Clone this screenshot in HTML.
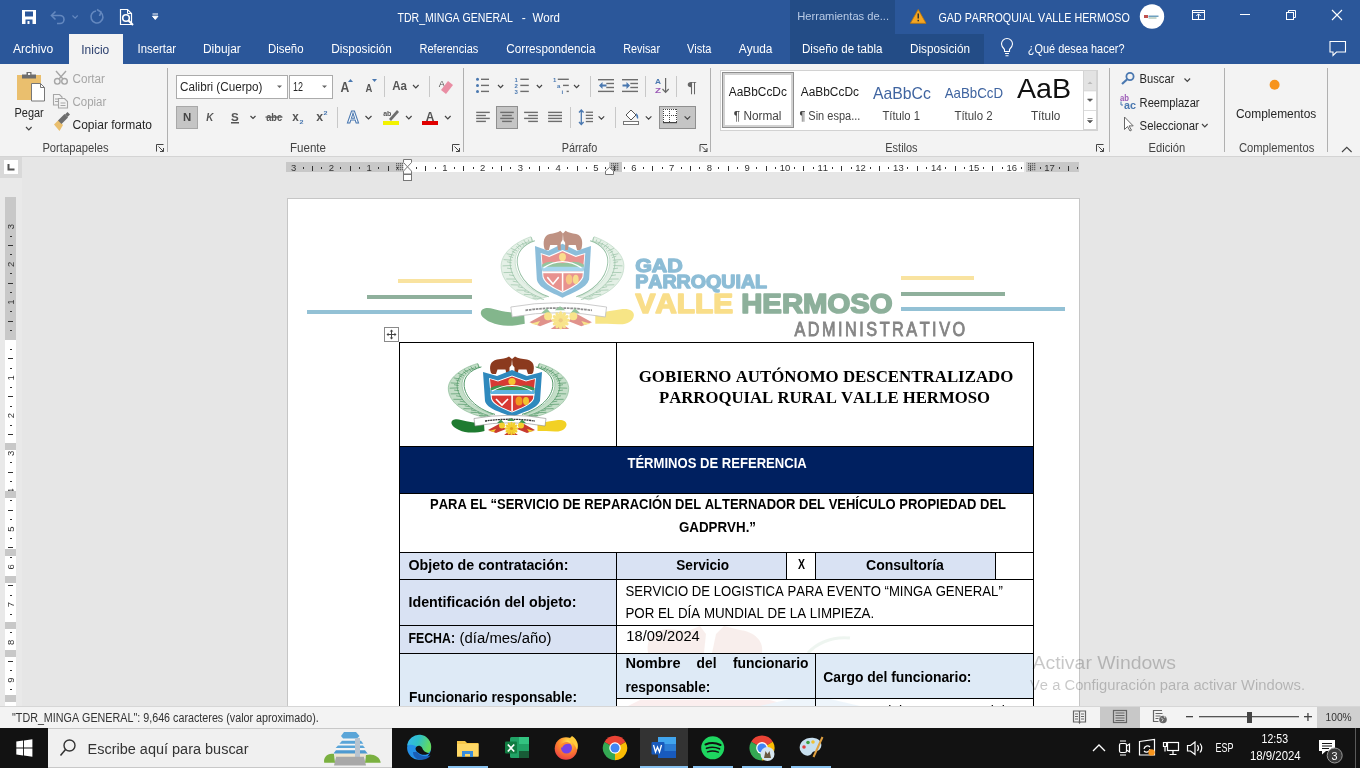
<!DOCTYPE html>
<html><head><meta charset="utf-8"><style>
html,body{margin:0;padding:0;background:#fff;overflow:hidden}
svg{display:block;will-change:transform}
text{font-kerning:none}
</style></head><body>
<svg width="1360" height="768" viewBox="0 0 1360 768">
<rect x="0" y="0" width="1360" height="64" fill="#2B579A" />
<rect x="790" y="0" width="105" height="34" fill="#234C86" />
<rect x="790" y="34" width="194" height="30" fill="#234C86" />
<rect x="69" y="34" width="54" height="30" fill="#F3F3F3" />
<text x="397.50" y="22.00" font-family="Liberation Sans" font-size="12" font-weight="normal" fill="#fff" textLength="115.49" lengthAdjust="spacingAndGlyphs" >TDR_MINGA GENERAL</text>
<text x="521.75" y="22.00" font-family="Liberation Sans" font-size="12" font-weight="normal" fill="#fff" >-</text>
<text x="532.50" y="22.00" font-family="Liberation Sans" font-size="12" font-weight="normal" fill="#fff" textLength="27.51" lengthAdjust="spacingAndGlyphs" >Word</text>
<text x="797.20" y="20.00" font-family="Liberation Sans" font-size="11" font-weight="normal" fill="#B9CBE6" textLength="91.81" lengthAdjust="spacingAndGlyphs" >Herramientas de...</text>
<text x="938.50" y="22.40" font-family="Liberation Sans" font-size="12" font-weight="normal" fill="#fff" textLength="191.30" lengthAdjust="spacingAndGlyphs" >GAD PARROQUIAL VALLE HERMOSO</text>
<path d="M22 10 h14 v14 h-14 Z" fill="#fff"/><rect x="25" y="11.5" width="8" height="5" fill="#2B579A"/><rect x="25.5" y="19.5" width="7" height="4.5" fill="#2B579A"/><rect x="27.5" y="21" width="2" height="3" fill="#fff"/>
<g fill="none" stroke="#6488BF" stroke-width="1.6"><path d="M52 15.5 h8 a4 4 0 0 1 0 8 h-3"/><path d="M55.5 11.5 l-4 4 l4 4"/></g>
<path d="M72.5 15.5 l2.6 2.6 l2.6 -2.6" fill="none" stroke="#6488BF" stroke-width="1.1"/>
<g fill="none" stroke="#6488BF" stroke-width="1.6"><path d="M101 12.5 a6 6 0 1 1 -5 -1.5"/><path d="M97 9.5 l4 2.5 l-1.5 4"/></g>
<path d="M120.5 9.5 h7 l4 4 v11 h-11 Z" fill="none" stroke="#fff" stroke-width="1.2"/><path d="M127.5 9.5 v4 h4" fill="none" stroke="#fff" stroke-width="1"/><circle cx="126" cy="18" r="3.3" fill="none" stroke="#fff" stroke-width="1.6"/><path d="M128.5 20.5 l4.5 4.5" stroke="#fff" stroke-width="2"/>
<path d="M152.5 14 h5.5 M152.5 16.2 h5.5 l-2.75 3.3 Z" fill="#fff" stroke="#fff" stroke-width="1"/>
<path d="M918.2 9.5 l7.8 13.8 h-15.6 Z" fill="#F5A623" stroke="#C77A00" stroke-width="0.8"/><rect x="917.5" y="13.5" width="1.5" height="5" fill="#333"/><rect x="917.5" y="19.8" width="1.5" height="1.5" fill="#333"/>
<circle cx="1152" cy="16.5" r="12.2" fill="#fff"/><rect x="1144" y="15" width="4" height="3" fill="#C0504D"/><rect x="1148.5" y="15.5" width="10" height="1.5" fill="#6FA0C0"/><rect x="1148.5" y="17.5" width="8" height="1" fill="#8DB09B"/>
<g fill="none" stroke="#fff" stroke-width="1"><rect x="1192.5" y="10.5" width="12" height="9"/><path d="M1192.5 12.5 h12 M1198.5 19.5 v-5.5 M1196.3 16 l2.2 -2.2 l2.2 2.2"/></g>
<rect x="1240" y="14" width="10" height="1" fill="#fff" />
<g fill="none" stroke="#fff" stroke-width="1"><rect x="1286.5" y="12.5" width="7" height="7"/><path d="M1288.5 12.5 v-2 h7 v7 h-2"/></g>
<path d="M1332 10 l10 10 M1342 10 l-10 10" stroke="#fff" stroke-width="1.1"/>
<g fill="none" stroke="#fff" stroke-width="1.1"><path d="M1004.5 51.5 v-2 c-1.5 -1.5 -3 -3 -3 -5.5 a5.5 5.5 0 0 1 11 0 c0 2.5 -1.5 4 -3 5.5 v2 Z"/><path d="M1005 53.5 h4 M1005.5 55.8 h3"/></g>
<path d="M1330 41.5 h15.5 v10.5 h-9 l-3.5 3.5 v-3.5 h-3 Z" fill="none" stroke="#fff" stroke-width="1.1"/>
<text x="13.00" y="53.00" font-family="Liberation Sans" font-size="12" font-weight="normal" fill="#fff" textLength="40.24" lengthAdjust="spacingAndGlyphs" >Archivo</text>
<text x="81.25" y="54.00" font-family="Liberation Sans" font-size="12" font-weight="normal" fill="#2E4270" textLength="27.99" lengthAdjust="spacingAndGlyphs" >Inicio</text>
<text x="137.50" y="53.00" font-family="Liberation Sans" font-size="12" font-weight="normal" fill="#fff" textLength="38.50" lengthAdjust="spacingAndGlyphs" >Insertar</text>
<text x="203.00" y="53.00" font-family="Liberation Sans" font-size="12" font-weight="normal" fill="#fff" textLength="37.76" lengthAdjust="spacingAndGlyphs" >Dibujar</text>
<text x="268.00" y="53.00" font-family="Liberation Sans" font-size="12" font-weight="normal" fill="#fff" textLength="35.50" lengthAdjust="spacingAndGlyphs" >Diseño</text>
<text x="331.25" y="53.00" font-family="Liberation Sans" font-size="12" font-weight="normal" fill="#fff" textLength="60.51" lengthAdjust="spacingAndGlyphs" >Disposición</text>
<text x="419.50" y="53.00" font-family="Liberation Sans" font-size="12" font-weight="normal" fill="#fff" textLength="58.76" lengthAdjust="spacingAndGlyphs" >Referencias</text>
<text x="506.25" y="53.00" font-family="Liberation Sans" font-size="12" font-weight="normal" fill="#fff" textLength="89.23" lengthAdjust="spacingAndGlyphs" >Correspondencia</text>
<text x="623.25" y="53.00" font-family="Liberation Sans" font-size="12" font-weight="normal" fill="#fff" textLength="36.75" lengthAdjust="spacingAndGlyphs" >Revisar</text>
<text x="687.00" y="53.00" font-family="Liberation Sans" font-size="12" font-weight="normal" fill="#fff" textLength="24.47" lengthAdjust="spacingAndGlyphs" >Vista</text>
<text x="738.75" y="53.00" font-family="Liberation Sans" font-size="12" font-weight="normal" fill="#fff" textLength="33.72" lengthAdjust="spacingAndGlyphs" >Ayuda</text>
<text x="802.00" y="53.00" font-family="Liberation Sans" font-size="12" font-weight="normal" fill="#fff" textLength="80.49" lengthAdjust="spacingAndGlyphs" >Diseño de tabla</text>
<text x="910.00" y="53.00" font-family="Liberation Sans" font-size="12" font-weight="normal" fill="#fff" textLength="60.01" lengthAdjust="spacingAndGlyphs" >Disposición</text>
<text x="1027.80" y="53.00" font-family="Liberation Sans" font-size="12" font-weight="normal" fill="#fff" textLength="96.69" lengthAdjust="spacingAndGlyphs" >¿Qué desea hacer?</text>
<rect x="0" y="64" width="1360" height="92" fill="#F3F3F3" />
<rect x="0" y="156" width="1360" height="1" fill="#D4D4D4" />
<rect x="167" y="68" width="1" height="84" fill="#B0B0B0" />
<rect x="463" y="68" width="1" height="84" fill="#B0B0B0" />
<rect x="710" y="68" width="1" height="84" fill="#B0B0B0" />
<rect x="1109" y="68" width="1" height="84" fill="#B0B0B0" />
<rect x="1224" y="68" width="1" height="84" fill="#B0B0B0" />
<rect x="1327" y="68" width="1" height="84" fill="#B0B0B0" />
<text x="42.40" y="152.00" font-family="Liberation Sans" font-size="12" font-weight="normal" fill="#444" textLength="66.11" lengthAdjust="spacingAndGlyphs" >Portapapeles</text>
<text x="290.00" y="152.00" font-family="Liberation Sans" font-size="12" font-weight="normal" fill="#444" textLength="36.01" lengthAdjust="spacingAndGlyphs" >Fuente</text>
<text x="561.70" y="152.00" font-family="Liberation Sans" font-size="12" font-weight="normal" fill="#444" textLength="35.59" lengthAdjust="spacingAndGlyphs" >Párrafo</text>
<text x="885.30" y="152.00" font-family="Liberation Sans" font-size="12" font-weight="normal" fill="#444" textLength="32.30" lengthAdjust="spacingAndGlyphs" >Estilos</text>
<text x="1148.60" y="152.30" font-family="Liberation Sans" font-size="12" font-weight="normal" fill="#444" textLength="36.70" lengthAdjust="spacingAndGlyphs" >Edición</text>
<text x="1238.90" y="152.30" font-family="Liberation Sans" font-size="12" font-weight="normal" fill="#444" textLength="75.40" lengthAdjust="spacingAndGlyphs" >Complementos</text>
<text x="14.50" y="117.00" font-family="Liberation Sans" font-size="12" font-weight="normal" fill="#262626" textLength="29.26" lengthAdjust="spacingAndGlyphs" >Pegar</text>
<text x="72.50" y="83.25" font-family="Liberation Sans" font-size="12" font-weight="normal" fill="#A6A6A6" textLength="32.51" lengthAdjust="spacingAndGlyphs" >Cortar</text>
<text x="72.50" y="106.25" font-family="Liberation Sans" font-size="12" font-weight="normal" fill="#A6A6A6" textLength="33.76" lengthAdjust="spacingAndGlyphs" >Copiar</text>
<text x="72.50" y="128.75" font-family="Liberation Sans" font-size="12" font-weight="normal" fill="#262626" textLength="79.49" lengthAdjust="spacingAndGlyphs" >Copiar formato</text>
<rect x="176" y="75" width="111" height="23" fill="#fff" stroke="#ABABAB" stroke-width="1" transform="translate(0.5 0.5)"/>
<rect x="289" y="75" width="43" height="23" fill="#fff" stroke="#ABABAB" stroke-width="1" transform="translate(0.5 0.5)"/>
<text x="180.00" y="91.25" font-family="Liberation Sans" font-size="12" font-weight="normal" fill="#262626" textLength="82.50" lengthAdjust="spacingAndGlyphs" >Calibri (Cuerpo)</text>
<text x="293.00" y="91.25" font-family="Liberation Sans" font-size="12" font-weight="normal" fill="#262626" textLength="10.00" lengthAdjust="spacingAndGlyphs" >12</text>
<rect x="720" y="70" width="377" height="60" fill="#fff" stroke="#D2D2D2" stroke-width="1" transform="translate(0.5 0.5)"/>
<rect x="722" y="72" width="72" height="56" fill="#8F8F8F" />
<rect x="723" y="73" width="70" height="54" fill="#D2D2D2" />
<rect x="725" y="75" width="66" height="50" fill="#fff" />
<text x="728.80" y="96.40" font-family="Liberation Sans" font-size="12" font-weight="normal" fill="#1A1A1A" textLength="58.01" lengthAdjust="spacingAndGlyphs" >AaBbCcDc</text>
<text x="733.80" y="120.30" font-family="Liberation Sans" font-size="12" font-weight="normal" fill="#444" textLength="47.70" lengthAdjust="spacingAndGlyphs" >¶ Normal</text>
<text x="800.80" y="96.40" font-family="Liberation Sans" font-size="12" font-weight="normal" fill="#1A1A1A" textLength="58.11" lengthAdjust="spacingAndGlyphs" >AaBbCcDc</text>
<text x="799.40" y="120.30" font-family="Liberation Sans" font-size="12" font-weight="normal" fill="#444" textLength="60.90" lengthAdjust="spacingAndGlyphs" >¶ Sin espa...</text>
<text x="873.00" y="98.80" font-family="Liberation Sans" font-size="17" font-weight="normal" fill="#3F64A0" textLength="57.92" lengthAdjust="spacingAndGlyphs" >AaBbCc</text>
<text x="882.40" y="120.30" font-family="Liberation Sans" font-size="12" font-weight="normal" fill="#444" textLength="37.60" lengthAdjust="spacingAndGlyphs" >Título 1</text>
<text x="944.70" y="97.60" font-family="Liberation Sans" font-size="15" font-weight="normal" fill="#3F64A0" textLength="58.31" lengthAdjust="spacingAndGlyphs" >AaBbCcD</text>
<text x="954.40" y="120.30" font-family="Liberation Sans" font-size="12" font-weight="normal" fill="#444" textLength="38.20" lengthAdjust="spacingAndGlyphs" >Título 2</text>
<text x="1017.00" y="98.20" font-family="Liberation Sans" font-size="28" font-weight="normal" fill="#111" textLength="54.20" lengthAdjust="spacingAndGlyphs" >AaB</text>
<text x="1030.90" y="120.30" font-family="Liberation Sans" font-size="12" font-weight="normal" fill="#444" textLength="29.41" lengthAdjust="spacingAndGlyphs" >Título</text>
<text x="1139.60" y="83.40" font-family="Liberation Sans" font-size="12" font-weight="normal" fill="#262626" textLength="34.80" lengthAdjust="spacingAndGlyphs" >Buscar</text>
<text x="1139.60" y="106.70" font-family="Liberation Sans" font-size="12" font-weight="normal" fill="#262626" textLength="59.99" lengthAdjust="spacingAndGlyphs" >Reemplazar</text>
<text x="1139.60" y="129.50" font-family="Liberation Sans" font-size="12" font-weight="normal" fill="#262626" textLength="59.20" lengthAdjust="spacingAndGlyphs" >Seleccionar</text>
<text x="1236.00" y="117.60" font-family="Liberation Sans" font-size="12" font-weight="normal" fill="#262626" textLength="80.30" lengthAdjust="spacingAndGlyphs" >Complementos</text>
<circle cx="1274.6" cy="84.8" r="5" fill="#F7941D"/>
<rect x="17" y="75" width="24" height="25" fill="#EABF6E"/>
<path d="M22 78.5 h14 v-4 h-4.5 v-2.5 h-5 v2.5 h-4.5 Z" fill="#6D6D6D"/><rect x="28" y="73" width="2.2" height="2" fill="#F3F3F3"/>
<path d="M31.5 83.5 h9 l4 4 v13.5 h-13 Z" fill="#fff" stroke="#777" stroke-width="1"/><path d="M40.5 83.5 v4 h4" fill="none" stroke="#777" stroke-width="1"/>
<path d="M26 127 l2.8 2.8 l2.8 -2.8" fill="none" stroke="#444" stroke-width="1.2"/>
<g fill="none" stroke="#A6A6A6" stroke-width="1.4"><circle cx="57.3" cy="81.3" r="2.8"/><circle cx="64.5" cy="81.3" r="2.8"/><path d="M59 79 L66 71 M63 79 L56 71"/></g>
<g fill="#F3F3F3" stroke="#A6A6A6" stroke-width="1.1"><path d="M53.5 94.5 h6 l2.5 2.5 v8 h-8.5 Z"/><path d="M58.5 98.5 h6 l3 3 v6.5 h-9 Z"/></g><g stroke="#A6A6A6" stroke-width="1"><path d="M55 99h4 M55 101.5h3 M60.5 103h5 M60.5 105.5h5"/></g>
<path d="M54 124.5 L58.5 120 L63 125 L59.5 131 Z" fill="#EABF6E"/><path d="M58 120.5 L64.5 114 L68 117.5 L61.5 124 Z" fill="#6D6D6D"/><path d="M65 114.5 l2.5 -2.5 l2.5 2.5 l-2.5 2.5 Z" fill="#6D6D6D"/>
<path d="M277 85.5 h5 l-2.5 2.5 Z M322 85.5 h5 l-2.5 2.5 Z" fill="#666"/>
<rect x="176.5" y="106.5" width="21" height="22" fill="#C5C5C5" stroke="#A8A8A8"/>
<text x="183.00" y="120.50" font-family="Liberation Sans" font-size="11" font-weight="bold" fill="#444" textLength="8.25" lengthAdjust="spacingAndGlyphs" >N</text>
<text x="206.25" y="120.50" font-family="Liberation Sans" font-size="11" font-weight="bold" font-style="italic" fill="#555" textLength="7.13" lengthAdjust="spacingAndGlyphs" >K</text>
<text x="231.00" y="120.50" font-family="Liberation Sans" font-size="11" font-weight="bold" fill="#555" textLength="7.74" lengthAdjust="spacingAndGlyphs" >S</text>
<rect x="231" y="122" width="8" height="1.5" fill="#555" />
<path d="M250.5 116 l2.5 2.5 l2.5 -2.5" fill="none" stroke="#444" stroke-width="1.2"/>
<text x="266.25" y="121.00" font-family="Liberation Sans" font-size="11" font-weight="bold" fill="#555" textLength="15.86" lengthAdjust="spacingAndGlyphs" >abc</text>
<rect x="265.5" y="116.5" width="17" height="1.2" fill="#555" />
<text x="292.25" y="121.00" font-family="Liberation Sans" font-size="12" font-weight="bold" fill="#555" textLength="6.51" lengthAdjust="spacingAndGlyphs" >x</text>
<text x="299.50" y="123.50" font-family="Liberation Sans" font-size="6" font-weight="bold" fill="#4A78B0" textLength="4.01" lengthAdjust="spacingAndGlyphs" >2</text>
<text x="316.25" y="121.00" font-family="Liberation Sans" font-size="12" font-weight="bold" fill="#555" textLength="6.86" lengthAdjust="spacingAndGlyphs" >x</text>
<text x="323.50" y="114.50" font-family="Liberation Sans" font-size="6" font-weight="bold" fill="#4A78B0" textLength="4.01" lengthAdjust="spacingAndGlyphs" >2</text>
<text x="340.50" y="91.80" font-family="Liberation Sans" font-size="14" font-weight="bold" fill="#555" textLength="8.80" lengthAdjust="spacingAndGlyphs" >A</text>
<path d="M348 82 l2.5 -3 l2.5 3 Z" fill="#4A78B0"/>
<text x="365.40" y="91.80" font-family="Liberation Sans" font-size="11" font-weight="bold" fill="#555" textLength="6.80" lengthAdjust="spacingAndGlyphs" >A</text>
<path d="M372 79 h5 l-2.5 3 Z" fill="#4A78B0"/>
<rect x="384" y="76" width="1" height="21" fill="#C8C8C8" />
<rect x="429" y="76" width="1" height="21" fill="#C8C8C8" />
<text x="392.30" y="89.90" font-family="Liberation Sans" font-size="13" font-weight="bold" fill="#555" textLength="14.72" lengthAdjust="spacingAndGlyphs" >Aa</text>
<path d="M413 85 l2.8 2.8 l2.8 -2.8" fill="none" stroke="#444" stroke-width="1.2"/>
<text x="438.70" y="87.00" font-family="Liberation Sans" font-size="9" font-weight="normal" fill="#555" textLength="6.20" lengthAdjust="spacingAndGlyphs" >A</text>
<path d="M441 90 l7 -9 l5 4 l-7 9 Z" fill="#E98DA3"/>
<rect x="337" y="107" width="1" height="21" fill="#C8C8C8" />
<text x="347.00" y="122.60" font-family="Liberation Sans" font-size="16" font-weight="bold" fill="#fff" textLength="11.99" lengthAdjust="spacingAndGlyphs" stroke="#4A78B0" stroke-width="1">A</text>
<path d="M365.5 116 l3 3 l3 -3" fill="none" stroke="#444" stroke-width="1.2"/>
<text x="383.20" y="116.00" font-family="Liberation Sans" font-size="8" font-weight="bold" fill="#555" textLength="8.20" lengthAdjust="spacingAndGlyphs" >ab</text>
<path d="M389 119 l8 -9 l2 2 l-8 9 Z" fill="#6D6D6D"/>
<rect x="383" y="121" width="16" height="4" fill="#F2F200" />
<path d="M406 116 l2.8 2.8 l2.8 -2.8" fill="none" stroke="#444" stroke-width="1.2"/>
<text x="425.80" y="120.70" font-family="Liberation Sans" font-size="13" font-weight="bold" fill="#555" textLength="8.60" lengthAdjust="spacingAndGlyphs" >A</text>
<rect x="422" y="121" width="16" height="4" fill="#E00000" />
<path d="M445 116 l2.8 2.8 l2.8 -2.8" fill="none" stroke="#444" stroke-width="1.2"/>
<path d="M156.5 151.5 v-7 h7 M158.5 146.5 l5 5 M163.5 148 v3.5 h-3.5" fill="none" stroke="#444" stroke-width="1"/>
<path d="M452.5 151.5 v-7 h7 M454.5 146.5 l5 5 M459.5 148 v3.5 h-3.5" fill="none" stroke="#444" stroke-width="1"/>
<path d="M700.0 151.5 v-7 h7 M702.0 146.5 l5 5 M707.0 148 v3.5 h-3.5" fill="none" stroke="#444" stroke-width="1"/>
<path d="M1096.5 151.5 v-7 h7 M1098.5 146.5 l5 5 M1103.5 148 v3.5 h-3.5" fill="none" stroke="#444" stroke-width="1"/>
<circle cx="477.5" cy="79.3" r="1.5" fill="#4A78B0"/>
<rect x="481" y="78.6" width="8" height="1.4" fill="#6D6D6D" />
<rect x="520.3" y="78.6" width="8.5" height="1.4" fill="#6D6D6D" />
<circle cx="477.5" cy="85.4" r="1.5" fill="#4A78B0"/>
<rect x="481" y="84.7" width="8" height="1.4" fill="#6D6D6D" />
<rect x="520.3" y="84.7" width="8.5" height="1.4" fill="#6D6D6D" />
<circle cx="477.5" cy="91.4" r="1.5" fill="#4A78B0"/>
<rect x="481" y="90.7" width="8" height="1.4" fill="#6D6D6D" />
<rect x="520.3" y="90.7" width="8.5" height="1.4" fill="#6D6D6D" />
<path d="M498 85 l2.6 2.6 l2.6 -2.6 M536.8 85 l2.6 2.6 l2.6 -2.6 M574 85 l2.6 2.6 l2.6 -2.6" fill="none" stroke="#444" stroke-width="1.2"/>
<g font-family="Liberation Sans" font-weight="bold" font-size="6" fill="#4A78B0"><text x="514.5" y="82">1</text><text x="514.5" y="88">2</text><text x="514.5" y="94">3</text><text x="553" y="82">1</text><text x="557" y="88">a</text><text x="561.5" y="94">i</text></g>
<rect x="557.8" y="78.6" width="11" height="1.4" fill="#6D6D6D" />
<rect x="563" y="84.7" width="5.8" height="1.4" fill="#6D6D6D" />
<rect x="566.6" y="90.7" width="2.2" height="1.4" fill="#6D6D6D" />
<rect x="590" y="76" width="1" height="21" fill="#C8C8C8" />
<rect x="645" y="76" width="1" height="21" fill="#C8C8C8" />
<rect x="676" y="76" width="1" height="21" fill="#C8C8C8" />
<rect x="598" y="79" width="16" height="1.4" fill="#6D6D6D" />
<rect x="598" y="90.7" width="16" height="1.4" fill="#6D6D6D" />
<rect x="606.3" y="82.8" width="7.7" height="1.4" fill="#6D6D6D" />
<rect x="606.3" y="86.8" width="7.7" height="1.4" fill="#6D6D6D" />
<rect x="622" y="79" width="16" height="1.4" fill="#6D6D6D" />
<rect x="622" y="90.7" width="16" height="1.4" fill="#6D6D6D" />
<rect x="630.3" y="82.8" width="7.7" height="1.4" fill="#6D6D6D" />
<rect x="630.3" y="86.8" width="7.7" height="1.4" fill="#6D6D6D" />
<path d="M599 85.5 l3.5 -3.5 v2.5 h4 v2 h-4 v2.5 Z" fill="#4A78B0"/>
<path d="M630 85.5 l-3.5 -3.5 v2.5 h-4 v2 h4 v2.5 Z" fill="#4A78B0"/>
<text x="655.00" y="84.40" font-family="Liberation Sans" font-size="8" font-weight="bold" fill="#4A78B0" textLength="6.00" lengthAdjust="spacingAndGlyphs" >A</text>
<text x="655.00" y="92.60" font-family="Liberation Sans" font-size="8" font-weight="bold" fill="#9B59B6" textLength="6.01" lengthAdjust="spacingAndGlyphs" >Z</text>
<path d="M665.6 78 v14 M662.5 89 l3.1 3.3 l3.1 -3.3" fill="none" stroke="#666" stroke-width="1.2"/>
<text x="687.00" y="92.10" font-family="Liberation Sans" font-size="14" font-weight="normal" fill="#666" textLength="9.99" lengthAdjust="spacingAndGlyphs" >¶</text>
<rect x="476.2" y="111.7" width="13.6" height="1.4" fill="#6D6D6D" />
<rect x="476.2" y="114.8" width="9.7" height="1.4" fill="#6D6D6D" />
<rect x="476.2" y="117.7" width="13.6" height="1.4" fill="#6D6D6D" />
<rect x="476.2" y="120.7" width="9.7" height="1.4" fill="#6D6D6D" />
<rect x="496.5" y="106.5" width="21" height="22" fill="#C5C5C5" stroke="#8F8F8F"/>
<rect x="500.2" y="111.7" width="13.6" height="1.4" fill="#6D6D6D" />
<rect x="502.1" y="114.8" width="9.7" height="1.4" fill="#6D6D6D" />
<rect x="500.2" y="117.7" width="13.6" height="1.4" fill="#6D6D6D" />
<rect x="502.1" y="120.7" width="9.7" height="1.4" fill="#6D6D6D" />
<rect x="524.1" y="111.7" width="13.8" height="1.4" fill="#6D6D6D" />
<rect x="528.2" y="114.8" width="9.7" height="1.4" fill="#6D6D6D" />
<rect x="524.1" y="117.7" width="13.8" height="1.4" fill="#6D6D6D" />
<rect x="528.2" y="120.7" width="9.7" height="1.4" fill="#6D6D6D" />
<rect x="548.1" y="111.7" width="13.9" height="1.4" fill="#6D6D6D" />
<rect x="548.1" y="114.8" width="13.9" height="1.4" fill="#6D6D6D" />
<rect x="548.1" y="117.7" width="13.9" height="1.4" fill="#6D6D6D" />
<rect x="548.1" y="120.7" width="13.9" height="1.4" fill="#6D6D6D" />
<rect x="570" y="107" width="1" height="21" fill="#C8C8C8" />
<path d="M581.3 110 v14.5 M579 112.5 l2.3 -2.5 l2.3 2.5 M579 122 l2.3 2.5 l2.3 -2.5" fill="none" stroke="#4A78B0" stroke-width="1.3"/>
<rect x="585.8" y="111.60000000000001" width="7.2" height="1.3" fill="#6D6D6D" />
<rect x="585.8" y="114.7" width="7.2" height="1.3" fill="#6D6D6D" />
<rect x="585.8" y="117.80000000000001" width="7.2" height="1.3" fill="#6D6D6D" />
<rect x="585.8" y="120.9" width="7.2" height="1.3" fill="#6D6D6D" />
<rect x="615" y="107" width="1" height="21" fill="#C8C8C8" />
<rect x="623.5" y="121.5" width="15" height="3" fill="#fff" stroke="#777" stroke-width="1"/>
<path d="M626 115 l5 -5 l5 5 l-5 5 Z" fill="#fff" stroke="#555" stroke-width="1"/><path d="M636 113 q3 2 2 6 q-2 -1 -2 -6 Z" fill="#4A78B0"/>
<rect x="659.5" y="106.5" width="36" height="22" fill="#C5C5C5" stroke="#8F8F8F"/>
<rect x="663" y="109" width="14" height="14" fill="#fff"/>
<g fill="#444"><rect x="663" y="109" width="1" height="1"/><rect x="663" y="115" width="1" height="1"/><rect x="663" y="109" width="1" height="1"/><rect x="669" y="109" width="1" height="1"/><rect x="676" y="109" width="1" height="1"/><rect x="665" y="109" width="1" height="1"/><rect x="665" y="115" width="1" height="1"/><rect x="663" y="111" width="1" height="1"/><rect x="669" y="111" width="1" height="1"/><rect x="676" y="111" width="1" height="1"/><rect x="667" y="109" width="1" height="1"/><rect x="667" y="115" width="1" height="1"/><rect x="663" y="113" width="1" height="1"/><rect x="669" y="113" width="1" height="1"/><rect x="676" y="113" width="1" height="1"/><rect x="669" y="109" width="1" height="1"/><rect x="669" y="115" width="1" height="1"/><rect x="663" y="115" width="1" height="1"/><rect x="669" y="115" width="1" height="1"/><rect x="676" y="115" width="1" height="1"/><rect x="671" y="109" width="1" height="1"/><rect x="671" y="115" width="1" height="1"/><rect x="663" y="117" width="1" height="1"/><rect x="669" y="117" width="1" height="1"/><rect x="676" y="117" width="1" height="1"/><rect x="673" y="109" width="1" height="1"/><rect x="673" y="115" width="1" height="1"/><rect x="663" y="119" width="1" height="1"/><rect x="669" y="119" width="1" height="1"/><rect x="676" y="119" width="1" height="1"/><rect x="675" y="109" width="1" height="1"/><rect x="675" y="115" width="1" height="1"/><rect x="663" y="121" width="1" height="1"/><rect x="669" y="121" width="1" height="1"/><rect x="676" y="121" width="1" height="1"/></g>
<rect x="663" y="122" width="14" height="1.2" fill="#444" />
<path d="M598.6 116.3 l2.8 2.8 l2.8 -2.8 M645.8 116.3 l2.8 2.8 l2.8 -2.8 M684.6 116.3 l2.8 2.8 l2.8 -2.8" fill="none" stroke="#444" stroke-width="1.2"/>
<rect x="1083.5" y="70.5" width="13" height="59" fill="#fff" stroke="#D4D4D4"/>
<rect x="1084" y="71" width="12" height="20" fill="#E3E3E3"/>
<rect x="1084" y="90.5" width="12" height="0.8" fill="#D4D4D4" />
<rect x="1084" y="110" width="12" height="0.8" fill="#D4D4D4" />
<path d="M1087.5 84 l2.5 -2.5 l2.5 2.5 Z" fill="#BBB"/><path d="M1087.5 99 h5 l-2.5 2.5 Z M1087.5 118.5 h5 M1087.5 120.5 h5 l-2.5 2.5 Z" fill="#555" stroke="#555" stroke-width="0.6"/>
<circle cx="1130" cy="76.5" r="3.6" fill="none" stroke="#4A78B0" stroke-width="1.8"/><path d="M1127.5 79 l-5.5 5" stroke="#4A78B0" stroke-width="2.2"/>
<path d="M1184.5 78.5 l2.8 2.8 l2.8 -2.8 M1202 124 l2.8 2.8 l2.8 -2.8" fill="none" stroke="#444" stroke-width="1.2"/>
<text x="1120.00" y="100.50" font-family="Liberation Sans" font-size="9" font-weight="bold" fill="#9B59B6" textLength="9.00" lengthAdjust="spacingAndGlyphs" >ab</text>
<text x="1124.00" y="108.50" font-family="Liberation Sans" font-size="10" font-weight="bold" fill="#4A78B0" textLength="12.00" lengthAdjust="spacingAndGlyphs" >ac</text>
<path d="M1121 101.5 v3.5 h2" fill="none" stroke="#4A78B0" stroke-width="1"/>
<path d="M1124.5 117 v12.5 l3 -3 l2.5 4.5 l1.5 -0.8 l-2.5 -4.3 h4.2 Z" fill="#fff" stroke="#666" stroke-width="1"/>
<path d="M1342 152 l4.8 -4.6 l4.8 4.6" fill="none" stroke="#444" stroke-width="1.2"/>
<rect x="0" y="157" width="1360" height="549" fill="#E6E6E6" />
<rect x="0" y="157" width="22" height="549" fill="#E9E9E9" />
<rect x="0" y="157" width="22" height="21" fill="#D9D9D9" />
<rect x="4" y="160" width="14" height="14" fill="#fff" />
<path d="M8.5 164 v5.5 h6" fill="none" stroke="#555" stroke-width="2"/>
<rect x="286" y="162" width="117" height="10" fill="#C8C8C8" />
<rect x="403" y="162" width="621" height="10" fill="#fff" />
<rect x="1026" y="162" width="53" height="10" fill="#C8C8C8" />
<rect x="609" y="162" width="13" height="10" fill="#C8C8C8" />
<text x="293.60" y="170.5" font-family="Liberation Sans" font-size="9.5" fill="#333" text-anchor="middle">3</text>
<rect x="303" y="167" width="1" height="2" fill="#333" />
<rect x="312" y="166" width="1" height="5" fill="#333" />
<rect x="321" y="167" width="1" height="2" fill="#333" />
<text x="331.40" y="170.5" font-family="Liberation Sans" font-size="9.5" fill="#333" text-anchor="middle">2</text>
<rect x="340" y="167" width="1" height="2" fill="#333" />
<rect x="350" y="166" width="1" height="5" fill="#333" />
<rect x="359" y="167" width="1" height="2" fill="#333" />
<text x="369.20" y="170.5" font-family="Liberation Sans" font-size="9.5" fill="#333" text-anchor="middle">1</text>
<rect x="378" y="167" width="1" height="2" fill="#333" />
<rect x="388" y="166" width="1" height="5" fill="#333" />
<rect x="397" y="167" width="1" height="2" fill="#333" />
<rect x="416" y="167" width="1" height="2" fill="#333" />
<rect x="425" y="166" width="1" height="5" fill="#333" />
<rect x="435" y="167" width="1" height="2" fill="#333" />
<text x="444.80" y="170.5" font-family="Liberation Sans" font-size="9.5" fill="#333" text-anchor="middle">1</text>
<rect x="454" y="167" width="1" height="2" fill="#333" />
<rect x="463" y="166" width="1" height="5" fill="#333" />
<rect x="473" y="167" width="1" height="2" fill="#333" />
<text x="482.60" y="170.5" font-family="Liberation Sans" font-size="9.5" fill="#333" text-anchor="middle">2</text>
<rect x="492" y="167" width="1" height="2" fill="#333" />
<rect x="501" y="166" width="1" height="5" fill="#333" />
<rect x="510" y="167" width="1" height="2" fill="#333" />
<text x="520.40" y="170.5" font-family="Liberation Sans" font-size="9.5" fill="#333" text-anchor="middle">3</text>
<rect x="529" y="167" width="1" height="2" fill="#333" />
<rect x="539" y="166" width="1" height="5" fill="#333" />
<rect x="548" y="167" width="1" height="2" fill="#333" />
<text x="558.20" y="170.5" font-family="Liberation Sans" font-size="9.5" fill="#333" text-anchor="middle">4</text>
<rect x="567" y="167" width="1" height="2" fill="#333" />
<rect x="577" y="166" width="1" height="5" fill="#333" />
<rect x="586" y="167" width="1" height="2" fill="#333" />
<text x="596.00" y="170.5" font-family="Liberation Sans" font-size="9.5" fill="#333" text-anchor="middle">5</text>
<rect x="605" y="167" width="1" height="2" fill="#333" />
<rect x="614" y="166" width="1" height="5" fill="#333" />
<rect x="624" y="167" width="1" height="2" fill="#333" />
<text x="633.80" y="170.5" font-family="Liberation Sans" font-size="9.5" fill="#333" text-anchor="middle">6</text>
<rect x="643" y="167" width="1" height="2" fill="#333" />
<rect x="652" y="166" width="1" height="5" fill="#333" />
<rect x="662" y="167" width="1" height="2" fill="#333" />
<text x="671.60" y="170.5" font-family="Liberation Sans" font-size="9.5" fill="#333" text-anchor="middle">7</text>
<rect x="681" y="167" width="1" height="2" fill="#333" />
<rect x="690" y="166" width="1" height="5" fill="#333" />
<rect x="699" y="167" width="1" height="2" fill="#333" />
<text x="709.40" y="170.5" font-family="Liberation Sans" font-size="9.5" fill="#333" text-anchor="middle">8</text>
<rect x="718" y="167" width="1" height="2" fill="#333" />
<rect x="728" y="166" width="1" height="5" fill="#333" />
<rect x="737" y="167" width="1" height="2" fill="#333" />
<text x="747.20" y="170.5" font-family="Liberation Sans" font-size="9.5" fill="#333" text-anchor="middle">9</text>
<rect x="756" y="167" width="1" height="2" fill="#333" />
<rect x="766" y="166" width="1" height="5" fill="#333" />
<rect x="775" y="167" width="1" height="2" fill="#333" />
<text x="785.00" y="170.5" font-family="Liberation Sans" font-size="9.5" fill="#333" text-anchor="middle">10</text>
<rect x="794" y="167" width="1" height="2" fill="#333" />
<rect x="803" y="166" width="1" height="5" fill="#333" />
<rect x="813" y="167" width="1" height="2" fill="#333" />
<text x="822.80" y="170.5" font-family="Liberation Sans" font-size="9.5" fill="#333" text-anchor="middle">11</text>
<rect x="832" y="167" width="1" height="2" fill="#333" />
<rect x="841" y="166" width="1" height="5" fill="#333" />
<rect x="851" y="167" width="1" height="2" fill="#333" />
<text x="860.60" y="170.5" font-family="Liberation Sans" font-size="9.5" fill="#333" text-anchor="middle">12</text>
<rect x="870" y="167" width="1" height="2" fill="#333" />
<rect x="879" y="166" width="1" height="5" fill="#333" />
<rect x="888" y="167" width="1" height="2" fill="#333" />
<text x="898.40" y="170.5" font-family="Liberation Sans" font-size="9.5" fill="#333" text-anchor="middle">13</text>
<rect x="907" y="167" width="1" height="2" fill="#333" />
<rect x="917" y="166" width="1" height="5" fill="#333" />
<rect x="926" y="167" width="1" height="2" fill="#333" />
<text x="936.20" y="170.5" font-family="Liberation Sans" font-size="9.5" fill="#333" text-anchor="middle">14</text>
<rect x="945" y="167" width="1" height="2" fill="#333" />
<rect x="955" y="166" width="1" height="5" fill="#333" />
<rect x="964" y="167" width="1" height="2" fill="#333" />
<text x="974.00" y="170.5" font-family="Liberation Sans" font-size="9.5" fill="#333" text-anchor="middle">15</text>
<rect x="983" y="167" width="1" height="2" fill="#333" />
<rect x="992" y="166" width="1" height="5" fill="#333" />
<rect x="1002" y="167" width="1" height="2" fill="#333" />
<text x="1011.80" y="170.5" font-family="Liberation Sans" font-size="9.5" fill="#333" text-anchor="middle">16</text>
<rect x="1021" y="167" width="1" height="2" fill="#333" />
<rect x="1030" y="166" width="1" height="5" fill="#333" />
<rect x="1040" y="167" width="1" height="2" fill="#333" />
<text x="1049.60" y="170.5" font-family="Liberation Sans" font-size="9.5" fill="#333" text-anchor="middle">17</text>
<rect x="1059" y="167" width="1" height="2" fill="#333" />
<rect x="1068" y="166" width="1" height="5" fill="#333" />
<rect x="1077" y="167" width="1" height="2" fill="#333" />
<g fill="#666"><rect x="396" y="163" width="1.3" height="1.3"/><rect x="396" y="165" width="1.3" height="1.3"/><rect x="396" y="167" width="1.3" height="1.3"/><rect x="396" y="169" width="1.3" height="1.3"/><rect x="398" y="163" width="1.3" height="1.3"/><rect x="398" y="165" width="1.3" height="1.3"/><rect x="398" y="167" width="1.3" height="1.3"/><rect x="398" y="169" width="1.3" height="1.3"/><rect x="400" y="163" width="1.3" height="1.3"/><rect x="400" y="165" width="1.3" height="1.3"/><rect x="400" y="167" width="1.3" height="1.3"/><rect x="400" y="169" width="1.3" height="1.3"/><rect x="402" y="163" width="1.3" height="1.3"/><rect x="402" y="165" width="1.3" height="1.3"/><rect x="402" y="167" width="1.3" height="1.3"/><rect x="402" y="169" width="1.3" height="1.3"/></g>
<g fill="#666"><rect x="611" y="163" width="1.3" height="1.3"/><rect x="611" y="165" width="1.3" height="1.3"/><rect x="611" y="167" width="1.3" height="1.3"/><rect x="611" y="169" width="1.3" height="1.3"/><rect x="613" y="163" width="1.3" height="1.3"/><rect x="613" y="165" width="1.3" height="1.3"/><rect x="613" y="167" width="1.3" height="1.3"/><rect x="613" y="169" width="1.3" height="1.3"/><rect x="615" y="163" width="1.3" height="1.3"/><rect x="615" y="165" width="1.3" height="1.3"/><rect x="615" y="167" width="1.3" height="1.3"/><rect x="615" y="169" width="1.3" height="1.3"/><rect x="617" y="163" width="1.3" height="1.3"/><rect x="617" y="165" width="1.3" height="1.3"/><rect x="617" y="167" width="1.3" height="1.3"/><rect x="617" y="169" width="1.3" height="1.3"/></g>
<g fill="#666"><rect x="1028" y="163" width="1.3" height="1.3"/><rect x="1028" y="165" width="1.3" height="1.3"/><rect x="1028" y="167" width="1.3" height="1.3"/><rect x="1028" y="169" width="1.3" height="1.3"/><rect x="1030" y="163" width="1.3" height="1.3"/><rect x="1030" y="165" width="1.3" height="1.3"/><rect x="1030" y="167" width="1.3" height="1.3"/><rect x="1030" y="169" width="1.3" height="1.3"/><rect x="1032" y="163" width="1.3" height="1.3"/><rect x="1032" y="165" width="1.3" height="1.3"/><rect x="1032" y="167" width="1.3" height="1.3"/><rect x="1032" y="169" width="1.3" height="1.3"/><rect x="1034" y="163" width="1.3" height="1.3"/><rect x="1034" y="165" width="1.3" height="1.3"/><rect x="1034" y="167" width="1.3" height="1.3"/><rect x="1034" y="169" width="1.3" height="1.3"/></g>
<path d="M403.5 159.5 h8 v3 l-4 4.3 l4 4.3 v2.9 h-8 v-2.9 l4 -4.3 l-4 -4.3 Z" fill="#fff" stroke="#777" stroke-width="1"/>
<rect x="403.5" y="174.5" width="8" height="6" fill="#fff" stroke="#777" stroke-width="1"/>
<path d="M605.5 174.5 v-3.5 l4 -3.5 l4 3.5 v3.5 Z" fill="#fff" stroke="#777" stroke-width="1"/>
<rect x="5" y="197" width="11" height="143" fill="#C8C8C8" />
<rect x="5" y="340" width="11" height="366" fill="#fff" />
<text x="0" y="0" transform="translate(13.5 226.60) rotate(-90)" font-family="Liberation Sans" font-size="9.5" fill="#333" text-anchor="middle">3</text>
<rect x="10" y="236" width="2" height="1" fill="#333" />
<rect x="8" y="245" width="5" height="1" fill="#333" />
<rect x="10" y="254" width="2" height="1" fill="#333" />
<text x="0" y="0" transform="translate(13.5 264.40) rotate(-90)" font-family="Liberation Sans" font-size="9.5" fill="#333" text-anchor="middle">2</text>
<rect x="10" y="273" width="2" height="1" fill="#333" />
<rect x="8" y="283" width="5" height="1" fill="#333" />
<rect x="10" y="292" width="2" height="1" fill="#333" />
<text x="0" y="0" transform="translate(13.5 302.20) rotate(-90)" font-family="Liberation Sans" font-size="9.5" fill="#333" text-anchor="middle">1</text>
<rect x="10" y="311" width="2" height="1" fill="#333" />
<rect x="8" y="321" width="5" height="1" fill="#333" />
<rect x="10" y="330" width="2" height="1" fill="#333" />
<rect x="10" y="349" width="2" height="1" fill="#333" />
<rect x="8" y="358" width="5" height="1" fill="#333" />
<rect x="10" y="368" width="2" height="1" fill="#333" />
<text x="0" y="0" transform="translate(13.5 377.80) rotate(-90)" font-family="Liberation Sans" font-size="9.5" fill="#333" text-anchor="middle">1</text>
<rect x="10" y="387" width="2" height="1" fill="#333" />
<rect x="8" y="396" width="5" height="1" fill="#333" />
<rect x="10" y="406" width="2" height="1" fill="#333" />
<text x="0" y="0" transform="translate(13.5 415.60) rotate(-90)" font-family="Liberation Sans" font-size="9.5" fill="#333" text-anchor="middle">2</text>
<rect x="10" y="425" width="2" height="1" fill="#333" />
<rect x="8" y="434" width="5" height="1" fill="#333" />
<rect x="10" y="443" width="2" height="1" fill="#333" />
<text x="0" y="0" transform="translate(13.5 453.40) rotate(-90)" font-family="Liberation Sans" font-size="9.5" fill="#333" text-anchor="middle">3</text>
<rect x="10" y="462" width="2" height="1" fill="#333" />
<rect x="8" y="472" width="5" height="1" fill="#333" />
<rect x="10" y="481" width="2" height="1" fill="#333" />
<text x="0" y="0" transform="translate(13.5 491.20) rotate(-90)" font-family="Liberation Sans" font-size="9.5" fill="#333" text-anchor="middle">4</text>
<rect x="10" y="500" width="2" height="1" fill="#333" />
<rect x="8" y="510" width="5" height="1" fill="#333" />
<rect x="10" y="519" width="2" height="1" fill="#333" />
<text x="0" y="0" transform="translate(13.5 529.00) rotate(-90)" font-family="Liberation Sans" font-size="9.5" fill="#333" text-anchor="middle">5</text>
<rect x="10" y="538" width="2" height="1" fill="#333" />
<rect x="8" y="547" width="5" height="1" fill="#333" />
<rect x="10" y="557" width="2" height="1" fill="#333" />
<text x="0" y="0" transform="translate(13.5 566.80) rotate(-90)" font-family="Liberation Sans" font-size="9.5" fill="#333" text-anchor="middle">6</text>
<rect x="10" y="576" width="2" height="1" fill="#333" />
<rect x="8" y="585" width="5" height="1" fill="#333" />
<rect x="10" y="595" width="2" height="1" fill="#333" />
<text x="0" y="0" transform="translate(13.5 604.60) rotate(-90)" font-family="Liberation Sans" font-size="9.5" fill="#333" text-anchor="middle">7</text>
<rect x="10" y="614" width="2" height="1" fill="#333" />
<rect x="8" y="623" width="5" height="1" fill="#333" />
<rect x="10" y="632" width="2" height="1" fill="#333" />
<text x="0" y="0" transform="translate(13.5 642.40) rotate(-90)" font-family="Liberation Sans" font-size="9.5" fill="#333" text-anchor="middle">8</text>
<rect x="10" y="651" width="2" height="1" fill="#333" />
<rect x="8" y="661" width="5" height="1" fill="#333" />
<rect x="10" y="670" width="2" height="1" fill="#333" />
<text x="0" y="0" transform="translate(13.5 680.20) rotate(-90)" font-family="Liberation Sans" font-size="9.5" fill="#333" text-anchor="middle">9</text>
<rect x="10" y="689" width="2" height="1" fill="#333" />
<rect x="8" y="699" width="5" height="1" fill="#333" />
<rect x="5" y="443" width="11" height="7" fill="#C8C8C8" />
<rect x="5" y="491" width="11" height="7" fill="#C8C8C8" />
<rect x="5" y="549" width="11" height="7" fill="#C8C8C8" />
<rect x="5" y="576" width="11" height="7" fill="#C8C8C8" />
<rect x="5" y="622" width="11" height="7" fill="#C8C8C8" />
<rect x="5" y="650" width="11" height="7" fill="#C8C8C8" />
<rect x="5" y="695" width="11" height="7" fill="#C8C8C8" />
<rect x="287" y="198" width="793" height="508" fill="#C6C6C6" />
<rect x="288" y="199" width="791" height="507" fill="#fff" />
<rect x="398" y="279" width="74" height="4" fill="#F9E3A0" />
<rect x="367" y="295" width="105" height="4" fill="#8FB09C" />
<rect x="307" y="310" width="165" height="4" fill="#93C1D5" />
<rect x="901" y="276" width="73" height="4" fill="#F9E3A0" />
<rect x="901" y="292" width="104" height="4" fill="#8FB09C" />
<rect x="901" y="307" width="164" height="4" fill="#93C1D5" />
<g opacity="0.55"><g transform="matrix(1.02 0 0 1.18 43.84 -192.2)"><path d="M477.6 363.5 C462.0 368.0 447.0 378.0 448.4 390.0 C449.5 402.0 462.0 412.0 482.8 417.0 L493.0 414.4 C478.0 410.0 464.0 400.0 462.2 386.4 C461.0 377.0 468.0 370.0 479.4 366.9 Z" fill="#CFE5D2" stroke="#7DB38C" stroke-width="0.6"/><path d="M479.4 366.9 C468.0 370.0 461.0 377.0 462.2 386.4 C464.0 400.0 478.0 410.0 493.0 414.4" fill="none" stroke="#3C8A55" stroke-width="0.9" transform="translate(2 0)"/><path d="M479.4 366.9 C468.0 370.0 461.0 377.0 462.2 386.4 C464.0 400.0 478.0 410.0 493.0 414.4" fill="none" stroke="#3C8A55" stroke-width="0.6" transform="translate(-5 1)"/><path d="M477.8 363.8 L478.9 367.8" stroke="#4F9565" stroke-width="0.8" opacity="0.85"/><path d="M475.0 365.9 L476.0 368.8" stroke="#4F9565" stroke-width="0.8" opacity="0.85"/><path d="M470.6 366.3 L473.3 369.8" stroke="#4F9565" stroke-width="0.8" opacity="0.85"/><path d="M468.8 368.5 L470.7 371.0" stroke="#4F9565" stroke-width="0.8" opacity="0.85"/><path d="M464.0 369.6 L468.3 372.4" stroke="#4F9565" stroke-width="0.8" opacity="0.85"/><path d="M463.3 371.7 L466.1 373.9" stroke="#4F9565" stroke-width="0.8" opacity="0.85"/><path d="M458.2 373.4 L464.2 375.6" stroke="#4F9565" stroke-width="0.8" opacity="0.85"/><path d="M458.9 375.6 L462.5 377.3" stroke="#4F9565" stroke-width="0.8" opacity="0.85"/><path d="M453.7 377.9 L461.1 379.2" stroke="#4F9565" stroke-width="0.8" opacity="0.85"/><path d="M455.7 379.9 L460.0 381.2" stroke="#4F9565" stroke-width="0.8" opacity="0.85"/><path d="M450.7 382.9 L459.2 383.4" stroke="#4F9565" stroke-width="0.8" opacity="0.85"/><path d="M454.0 384.7 L458.7 385.6" stroke="#4F9565" stroke-width="0.8" opacity="0.85"/><path d="M449.7 388.2 L458.6 387.9" stroke="#4F9565" stroke-width="0.8" opacity="0.85"/><path d="M454.1 390.1 L459.0 390.7" stroke="#4F9565" stroke-width="0.8" opacity="0.85"/><path d="M450.7 393.9 L459.8 393.7" stroke="#4F9565" stroke-width="0.8" opacity="0.85"/><path d="M456.1 395.8 L461.1 396.6" stroke="#4F9565" stroke-width="0.8" opacity="0.85"/><path d="M453.4 399.3 L462.7 399.4" stroke="#4F9565" stroke-width="0.8" opacity="0.85"/><path d="M459.7 401.1 L464.7 402.0" stroke="#4F9565" stroke-width="0.8" opacity="0.85"/><path d="M457.7 404.2 L467.1 404.5" stroke="#4F9565" stroke-width="0.8" opacity="0.85"/><path d="M464.7 405.8 L469.7 406.8" stroke="#4F9565" stroke-width="0.8" opacity="0.85"/><path d="M463.4 408.6 L472.7 408.9" stroke="#4F9565" stroke-width="0.8" opacity="0.85"/><path d="M471.0 409.9 L475.8 410.9" stroke="#4F9565" stroke-width="0.8" opacity="0.85"/><path d="M470.6 412.3 L479.2 412.7" stroke="#4F9565" stroke-width="0.8" opacity="0.85"/><path d="M478.4 413.3 L482.8 414.3" stroke="#4F9565" stroke-width="0.8" opacity="0.85"/><path d="M479.1 415.5 L486.6 415.7" stroke="#4F9565" stroke-width="0.8" opacity="0.85"/><path d="M486.9 416.0 L490.4 416.8" stroke="#4F9565" stroke-width="0.8" opacity="0.85"/><path d="M539.4 363.5 C555.0 368.0 570.0 378.0 568.6 390.0 C567.5 402.0 555.0 412.0 534.2 417.0 L524.0 414.4 C539.0 410.0 553.0 400.0 554.8 386.4 C556.0 377.0 549.0 370.0 537.6 366.9 Z" fill="#CFE5D2" stroke="#7DB38C" stroke-width="0.6"/><path d="M537.6 366.9 C549.0 370.0 556.0 377.0 554.8 386.4 C553.0 400.0 539.0 410.0 524.0 414.4" fill="none" stroke="#3C8A55" stroke-width="0.9" transform="translate(-2 0)"/><path d="M537.6 366.9 C549.0 370.0 556.0 377.0 554.8 386.4 C553.0 400.0 539.0 410.0 524.0 414.4" fill="none" stroke="#3C8A55" stroke-width="0.6" transform="translate(5 1)"/><path d="M539.2 363.8 L538.1 367.8" stroke="#4F9565" stroke-width="0.8" opacity="0.85"/><path d="M542.0 365.9 L541.0 368.8" stroke="#4F9565" stroke-width="0.8" opacity="0.85"/><path d="M546.4 366.3 L543.7 369.8" stroke="#4F9565" stroke-width="0.8" opacity="0.85"/><path d="M548.2 368.5 L546.3 371.0" stroke="#4F9565" stroke-width="0.8" opacity="0.85"/><path d="M553.0 369.6 L548.7 372.4" stroke="#4F9565" stroke-width="0.8" opacity="0.85"/><path d="M553.7 371.7 L550.9 373.9" stroke="#4F9565" stroke-width="0.8" opacity="0.85"/><path d="M558.8 373.4 L552.8 375.6" stroke="#4F9565" stroke-width="0.8" opacity="0.85"/><path d="M558.1 375.6 L554.5 377.3" stroke="#4F9565" stroke-width="0.8" opacity="0.85"/><path d="M563.3 377.9 L555.9 379.2" stroke="#4F9565" stroke-width="0.8" opacity="0.85"/><path d="M561.3 379.9 L557.0 381.2" stroke="#4F9565" stroke-width="0.8" opacity="0.85"/><path d="M566.3 382.9 L557.8 383.4" stroke="#4F9565" stroke-width="0.8" opacity="0.85"/><path d="M563.0 384.7 L558.3 385.6" stroke="#4F9565" stroke-width="0.8" opacity="0.85"/><path d="M567.3 388.2 L558.4 387.9" stroke="#4F9565" stroke-width="0.8" opacity="0.85"/><path d="M562.9 390.1 L558.0 390.7" stroke="#4F9565" stroke-width="0.8" opacity="0.85"/><path d="M566.3 393.9 L557.2 393.7" stroke="#4F9565" stroke-width="0.8" opacity="0.85"/><path d="M560.9 395.8 L555.9 396.6" stroke="#4F9565" stroke-width="0.8" opacity="0.85"/><path d="M563.6 399.3 L554.3 399.4" stroke="#4F9565" stroke-width="0.8" opacity="0.85"/><path d="M557.3 401.1 L552.3 402.0" stroke="#4F9565" stroke-width="0.8" opacity="0.85"/><path d="M559.3 404.2 L549.9 404.5" stroke="#4F9565" stroke-width="0.8" opacity="0.85"/><path d="M552.3 405.8 L547.3 406.8" stroke="#4F9565" stroke-width="0.8" opacity="0.85"/><path d="M553.6 408.6 L544.3 408.9" stroke="#4F9565" stroke-width="0.8" opacity="0.85"/><path d="M546.0 409.9 L541.2 410.9" stroke="#4F9565" stroke-width="0.8" opacity="0.85"/><path d="M546.4 412.3 L537.8 412.7" stroke="#4F9565" stroke-width="0.8" opacity="0.85"/><path d="M538.6 413.3 L534.2 414.3" stroke="#4F9565" stroke-width="0.8" opacity="0.85"/><path d="M537.9 415.5 L530.4 415.7" stroke="#4F9565" stroke-width="0.8" opacity="0.85"/><path d="M530.1 416.0 L526.5 416.8" stroke="#4F9565" stroke-width="0.8" opacity="0.85"/></g><g transform="matrix(1.33 0 0 1.33 -119.6 -249.6)"><path d="M451.5 423.5 C451 419.5 456 418.5 461 420 C468 422 476 423 484 423.5 L484.5 431 C476 433 466 433.5 459 430 C455 428 452 426 451.5 423.5 Z" fill="#1F7B30"/><path d="M537.5 423.5 C545 422 552 421 558 420 C563 419.5 567 421.5 566.5 425 C566 429 561 432 555 431.5 C549 431 543 431 537.5 431 Z" fill="#F2D125"/><path d="M474 418.5 Q510 412 546 418.5 L545 426 Q510 419.5 475 426 Z" fill="#fff" stroke="#8A8A8A" stroke-width="0.6"/><path d="M485 421 Q510 417.5 535 421" fill="none" stroke="#333" stroke-width="1.3" stroke-dasharray="2 0.6"/><path d="M488 430 L499 424 L506 429 L496 433 Z M535 430 L524 424 L517 429 L527 433 Z M504 435 L511 430 L518 435 Z" fill="#C83A2E"/><path d="M497 423 l4 -3.5 l3 3.5 Z M526 423 l-4 -3.5 l-3 3.5 Z M507 421 l4 -3 l4 3 Z" fill="#3F9650"/><path d="M489 431 l7 -2 l-2 3 Z M534 431 l-7 -2 l2 3 Z" fill="#F3CF2D"/><circle cx="502" cy="425.5" r="3" fill="#F3CF2D"/><circle cx="521" cy="425.5" r="3" fill="#F3CF2D"/><ellipse cx="516.10" cy="428.50" rx="2.2" ry="1.3" transform="rotate(0 516.10 428.50)" fill="#F3CF2D"/><ellipse cx="515.48" cy="430.80" rx="2.2" ry="1.3" transform="rotate(30 515.48 430.80)" fill="#F3CF2D"/><ellipse cx="513.80" cy="432.48" rx="2.2" ry="1.3" transform="rotate(60 513.80 432.48)" fill="#F3CF2D"/><ellipse cx="511.50" cy="433.10" rx="2.2" ry="1.3" transform="rotate(90 511.50 433.10)" fill="#F3CF2D"/><ellipse cx="509.20" cy="432.48" rx="2.2" ry="1.3" transform="rotate(120 509.20 432.48)" fill="#F3CF2D"/><ellipse cx="507.52" cy="430.80" rx="2.2" ry="1.3" transform="rotate(150 507.52 430.80)" fill="#F3CF2D"/><ellipse cx="506.90" cy="428.50" rx="2.2" ry="1.3" transform="rotate(180 506.90 428.50)" fill="#F3CF2D"/><ellipse cx="507.52" cy="426.20" rx="2.2" ry="1.3" transform="rotate(210 507.52 426.20)" fill="#F3CF2D"/><ellipse cx="509.20" cy="424.52" rx="2.2" ry="1.3" transform="rotate(240 509.20 424.52)" fill="#F3CF2D"/><ellipse cx="511.50" cy="423.90" rx="2.2" ry="1.3" transform="rotate(270 511.50 423.90)" fill="#F3CF2D"/><ellipse cx="513.80" cy="424.52" rx="2.2" ry="1.3" transform="rotate(300 513.80 424.52)" fill="#F3CF2D"/><ellipse cx="515.48" cy="426.20" rx="2.2" ry="1.3" transform="rotate(330 515.48 426.20)" fill="#F3CF2D"/><circle cx="511.5" cy="428.5" r="3.4" fill="#F3CF2D"/><circle cx="511.5" cy="428.5" r="1.6" fill="#E0A21C"/></g><g transform="matrix(0.95 0 0 1.15 76.1 -181.7)"><path d="M483 372 L497 376 L512 370 L527 376 L542 372 L540 401 C537 409 523 412 512 417 C501 412 487 409 485 401 Z" fill="#2F89BD"/><path d="M489 378 L498 380.5 L512 375.5 L526 380.5 L536 378 L534 399 C531 405 521 409 512 412.5 C503 409 493 405 491 399 Z" fill="#fff"/><path d="M490 379 L498 381.5 L512 376.5 L526 381.5 L535 379 L533 398.5 C530 404.5 521 408 512 411.5 C503 408 494 404.5 492 398.5 Z" fill="#D73A34"/><circle cx="512" cy="381.5" r="3.6" fill="#F6C431"/><path d="M490.5 388 C498 384 504 386 512 387 C520 386 526 384 534.5 388 L534.5 393 L490.5 393 Z" fill="#3F9650"/><path d="M490.5 390 L534.5 390 L534.3 394 L490.7 394 Z" fill="#5FB3DF"/><path d="M492 391 Q512 380 532 391" fill="none" stroke="#fff" stroke-width="1.2"/><rect x="490.8" y="394" width="43.5" height="1.6" fill="#fff"/><rect x="511.3" y="395" width="1.6" height="16" fill="#fff"/><path d="M496 399 L502 405 L508 399" fill="none" stroke="#fff" stroke-width="1.6"/><ellipse cx="519" cy="401" rx="3.5" ry="4.5" fill="#F29A1F"/><ellipse cx="526" cy="401" rx="3" ry="4" fill="#F2C230"/></g><g transform="matrix(0.88 0 0 1.1 112.4 -161.5)"><path d="M491 373 C489 367 490 361 497 359.5 C502 358.5 506 358.5 509 356.5 L512 359 L511.5 365 L509.5 367.5 L509.5 374 L506.5 374 L505.5 369.5 L497.5 369.5 L496 374 L492.5 374 Z" fill="#8B3A1E"/><path d="M533 373 C535 367 534 361 527 359.5 C522 358.5 518 358.5 515 356.5 L512 359 L512.5 365 L514.5 367.5 L514.5 374 L517.5 374 L518.5 369.5 L526.5 369.5 L528 374 L531.5 374 Z" fill="#8B3A1E"/></g></g>
<text x="635.20" y="271.70" font-family="Liberation Sans" font-size="19" font-weight="bold" fill="#8DBDD6" textLength="47.69" lengthAdjust="spacingAndGlyphs" stroke="#8DBDD6" stroke-width="1.3" stroke-linejoin="round">GAD</text>
<text x="635.20" y="288.10" font-family="Liberation Sans" font-size="18" font-weight="bold" fill="#8DBDD6" textLength="131.91" lengthAdjust="spacingAndGlyphs" stroke="#8DBDD6" stroke-width="1.3" stroke-linejoin="round">PARROQUIAL</text>
<text x="635.40" y="312.50" font-family="Liberation Sans" font-size="27" font-weight="bold" fill="#F9DE8A" textLength="97.64" lengthAdjust="spacingAndGlyphs" stroke="#F9DE8A" stroke-width="1.6" stroke-linejoin="round">VALLE</text>
<text x="741.20" y="312.50" font-family="Liberation Sans" font-size="27" font-weight="bold" fill="#8DB09B" textLength="151.39" lengthAdjust="spacingAndGlyphs" stroke="#8DB09B" stroke-width="1.6" stroke-linejoin="round">HERMOSO</text>
<text transform="matrix(0.8 0 0 1 0 0)" x="993.1" y="336.2" font-family="Liberation Sans" font-size="20.3" fill="#858585" stroke="#858585" stroke-width="0.9" textLength="213.3" lengthAdjust="spacing">ADMINISTRATIVO</text>
<rect x="384.5" y="327.5" width="14" height="14" fill="#fff" stroke="#8A8A8A" stroke-width="1"/>
<path d="M391.5 330 v9 M387 334.5 h9" stroke="#444" stroke-width="1"/>
<path d="M391.5 329.5 l-1.8 2 h3.6 Z M391.5 339.5 l-1.8 -2 h3.6 Z M386.5 334.5 l2 -1.8 v3.6 Z M396.5 334.5 l-2 -1.8 v3.6 Z" fill="#444"/>
<rect x="400" y="446" width="633" height="48" fill="#002060" />
<rect x="400" y="552" width="216" height="101" fill="#D9E2F3" />
<rect x="400" y="653" width="216" height="53" fill="#DEEAF6" />
<rect x="617" y="552" width="169" height="27" fill="#D9E2F3" />
<rect x="816" y="552" width="179" height="27" fill="#D9E2F3" />
<rect x="617" y="653" width="416" height="45" fill="#DEEAF6" />
<g opacity="0.08"><path d="M648 653 C646 640 652 630 668 629 L688 631 L700 626 L706 634 L704 653 Z" fill="#B03A1A"/><path d="M712 653 L716 634 L724 626 L740 630 C756 632 764 642 762 653 Z" fill="#B03A1A"/><path d="M808 653 C815 645 830 636 850 638" fill="none" stroke="#3A8A50" stroke-width="3"/><path d="M628 706 L640 700 L770 700 L790 706 Z" fill="#D03030"/><path d="M760 706 L790 699 L830 699 L860 706 Z" fill="#3090D0"/></g>
<rect x="399" y="342" width="635" height="1" fill="#000" />
<rect x="399" y="342" width="1" height="364" fill="#000" />
<rect x="1033" y="342" width="1" height="364" fill="#000" />
<rect x="399" y="446" width="635" height="1" fill="#000" />
<rect x="399" y="493" width="635" height="1" fill="#000" />
<rect x="399" y="552" width="635" height="1" fill="#000" />
<rect x="399" y="579" width="635" height="1" fill="#000" />
<rect x="399" y="625" width="635" height="1" fill="#000" />
<rect x="399" y="653" width="635" height="1" fill="#000" />
<rect x="616" y="342" width="1" height="104" fill="#000" />
<rect x="616" y="552" width="1" height="154" fill="#000" />
<rect x="786" y="552" width="1" height="27" fill="#000" />
<rect x="815" y="552" width="1" height="27" fill="#000" />
<rect x="995" y="552" width="1" height="27" fill="#000" />
<rect x="815" y="653" width="1" height="53" fill="#000" />
<rect x="616" y="698" width="417" height="1" fill="#000" />
<text x="638.70" y="381.50" font-family="Liberation Serif" font-size="17" font-weight="bold" fill="#000" textLength="374.71" lengthAdjust="spacingAndGlyphs" >GOBIERNO AUTÓNOMO DESCENTRALIZADO</text>
<text x="659.00" y="403.20" font-family="Liberation Serif" font-size="17" font-weight="bold" fill="#000" textLength="331.02" lengthAdjust="spacingAndGlyphs" >PARROQUIAL RURAL VALLE HERMOSO</text>
<text x="627.40" y="468.00" font-family="Liberation Sans" font-size="14" font-weight="bold" fill="#fff" textLength="179.41" lengthAdjust="spacingAndGlyphs" >TÉRMINOS DE REFERENCIA</text>
<text x="430.00" y="509.00" font-family="Liberation Sans" font-size="14" font-weight="bold" fill="#000" textLength="575.99" lengthAdjust="spacingAndGlyphs" >PARA EL “SERVICIO DE REPARACIÓN DEL ALTERNADOR DEL VEHÍCULO PROPIEDAD DEL</text>
<text x="679.00" y="531.80" font-family="Liberation Sans" font-size="14" font-weight="bold" fill="#000" textLength="77.01" lengthAdjust="spacingAndGlyphs" >GADPRVH.”</text>
<text x="408.50" y="569.90" font-family="Liberation Sans" font-size="14" font-weight="bold" fill="#000" textLength="159.91" lengthAdjust="spacingAndGlyphs" >Objeto de contratación:</text>
<text x="676.30" y="570.00" font-family="Liberation Sans" font-size="14" font-weight="bold" fill="#000" textLength="52.88" lengthAdjust="spacingAndGlyphs" >Servicio</text>
<text x="798.00" y="569.00" font-family="Liberation Sans" font-size="14" font-weight="bold" fill="#000" textLength="6.99" lengthAdjust="spacingAndGlyphs" >X</text>
<text x="866.00" y="570.00" font-family="Liberation Sans" font-size="14" font-weight="bold" fill="#000" textLength="77.91" lengthAdjust="spacingAndGlyphs" >Consultoría</text>
<text x="408.50" y="606.70" font-family="Liberation Sans" font-size="14" font-weight="bold" fill="#000" textLength="167.98" lengthAdjust="spacingAndGlyphs" >Identificación del objeto:</text>
<text x="625.40" y="595.60" font-family="Liberation Sans" font-size="14" font-weight="normal" fill="#000" textLength="377.40" lengthAdjust="spacingAndGlyphs" >SERVICIO DE LOGISTICA PARA EVENTO “MINGA GENERAL”</text>
<text x="625.40" y="618.30" font-family="Liberation Sans" font-size="14" font-weight="normal" fill="#000" textLength="248.80" lengthAdjust="spacingAndGlyphs" >POR EL DÍA MUNDIAL DE LA LIMPIEZA.</text>
<text x="408.50" y="642.70" font-family="Liberation Sans" font-size="14" font-weight="bold" fill="#000" textLength="46.50" lengthAdjust="spacingAndGlyphs" >FECHA:</text>
<text x="459.60" y="642.70" font-family="Liberation Sans" font-size="14" font-weight="normal" fill="#000" textLength="91.89" lengthAdjust="spacingAndGlyphs" >(día/mes/año)</text>
<text x="626.30" y="641.20" font-family="Liberation Sans" font-size="14" font-weight="normal" fill="#000" textLength="73.50" lengthAdjust="spacingAndGlyphs" >18/09/2024</text>
<text x="625.40" y="668.40" font-family="Liberation Sans" font-size="14" font-weight="bold" fill="#000" textLength="55.11" lengthAdjust="spacingAndGlyphs" >Nombre</text>
<text x="696.60" y="668.40" font-family="Liberation Sans" font-size="14" font-weight="bold" fill="#000" textLength="19.90" lengthAdjust="spacingAndGlyphs" >del</text>
<text x="733.00" y="668.40" font-family="Liberation Sans" font-size="14" font-weight="bold" fill="#000" textLength="75.49" lengthAdjust="spacingAndGlyphs" >funcionario</text>
<text x="625.40" y="691.50" font-family="Liberation Sans" font-size="14" font-weight="bold" fill="#000" textLength="84.89" lengthAdjust="spacingAndGlyphs" >responsable:</text>
<text x="823.30" y="681.50" font-family="Liberation Sans" font-size="14" font-weight="bold" fill="#000" textLength="148.20" lengthAdjust="spacingAndGlyphs" >Cargo del funcionario:</text>
<text x="409.00" y="702.20" font-family="Liberation Sans" font-size="14" font-weight="bold" fill="#000" textLength="167.99" lengthAdjust="spacingAndGlyphs" >Funcionario responsable:</text>
<text x="823.00" y="716.00" font-family="Liberation Sans" font-size="14" font-weight="normal" fill="#000" textLength="181.99" lengthAdjust="spacingAndGlyphs" >Tesorera del GAD Parroquial</text>
<g opacity="1.0"><path d="M477.6 363.5 C462.0 368.0 447.0 378.0 448.4 390.0 C449.5 402.0 462.0 412.0 482.8 417.0 L493.0 414.4 C478.0 410.0 464.0 400.0 462.2 386.4 C461.0 377.0 468.0 370.0 479.4 366.9 Z" fill="#C4DEC8" stroke="#7DB38C" stroke-width="0.6"/><path d="M479.4 366.9 C468.0 370.0 461.0 377.0 462.2 386.4 C464.0 400.0 478.0 410.0 493.0 414.4" fill="none" stroke="#3C8A55" stroke-width="0.9" transform="translate(2 0)"/><path d="M479.4 366.9 C468.0 370.0 461.0 377.0 462.2 386.4 C464.0 400.0 478.0 410.0 493.0 414.4" fill="none" stroke="#3C8A55" stroke-width="0.6" transform="translate(-5 1)"/><path d="M477.8 363.8 L478.9 367.8" stroke="#4F9565" stroke-width="0.8" opacity="0.85"/><path d="M475.0 365.9 L476.0 368.8" stroke="#4F9565" stroke-width="0.8" opacity="0.85"/><path d="M470.6 366.3 L473.3 369.8" stroke="#4F9565" stroke-width="0.8" opacity="0.85"/><path d="M468.8 368.5 L470.7 371.0" stroke="#4F9565" stroke-width="0.8" opacity="0.85"/><path d="M464.0 369.6 L468.3 372.4" stroke="#4F9565" stroke-width="0.8" opacity="0.85"/><path d="M463.3 371.7 L466.1 373.9" stroke="#4F9565" stroke-width="0.8" opacity="0.85"/><path d="M458.2 373.4 L464.2 375.6" stroke="#4F9565" stroke-width="0.8" opacity="0.85"/><path d="M458.9 375.6 L462.5 377.3" stroke="#4F9565" stroke-width="0.8" opacity="0.85"/><path d="M453.7 377.9 L461.1 379.2" stroke="#4F9565" stroke-width="0.8" opacity="0.85"/><path d="M455.7 379.9 L460.0 381.2" stroke="#4F9565" stroke-width="0.8" opacity="0.85"/><path d="M450.7 382.9 L459.2 383.4" stroke="#4F9565" stroke-width="0.8" opacity="0.85"/><path d="M454.0 384.7 L458.7 385.6" stroke="#4F9565" stroke-width="0.8" opacity="0.85"/><path d="M449.7 388.2 L458.6 387.9" stroke="#4F9565" stroke-width="0.8" opacity="0.85"/><path d="M454.1 390.1 L459.0 390.7" stroke="#4F9565" stroke-width="0.8" opacity="0.85"/><path d="M450.7 393.9 L459.8 393.7" stroke="#4F9565" stroke-width="0.8" opacity="0.85"/><path d="M456.1 395.8 L461.1 396.6" stroke="#4F9565" stroke-width="0.8" opacity="0.85"/><path d="M453.4 399.3 L462.7 399.4" stroke="#4F9565" stroke-width="0.8" opacity="0.85"/><path d="M459.7 401.1 L464.7 402.0" stroke="#4F9565" stroke-width="0.8" opacity="0.85"/><path d="M457.7 404.2 L467.1 404.5" stroke="#4F9565" stroke-width="0.8" opacity="0.85"/><path d="M464.7 405.8 L469.7 406.8" stroke="#4F9565" stroke-width="0.8" opacity="0.85"/><path d="M463.4 408.6 L472.7 408.9" stroke="#4F9565" stroke-width="0.8" opacity="0.85"/><path d="M471.0 409.9 L475.8 410.9" stroke="#4F9565" stroke-width="0.8" opacity="0.85"/><path d="M470.6 412.3 L479.2 412.7" stroke="#4F9565" stroke-width="0.8" opacity="0.85"/><path d="M478.4 413.3 L482.8 414.3" stroke="#4F9565" stroke-width="0.8" opacity="0.85"/><path d="M479.1 415.5 L486.6 415.7" stroke="#4F9565" stroke-width="0.8" opacity="0.85"/><path d="M486.9 416.0 L490.4 416.8" stroke="#4F9565" stroke-width="0.8" opacity="0.85"/><path d="M539.4 363.5 C555.0 368.0 570.0 378.0 568.6 390.0 C567.5 402.0 555.0 412.0 534.2 417.0 L524.0 414.4 C539.0 410.0 553.0 400.0 554.8 386.4 C556.0 377.0 549.0 370.0 537.6 366.9 Z" fill="#C4DEC8" stroke="#7DB38C" stroke-width="0.6"/><path d="M537.6 366.9 C549.0 370.0 556.0 377.0 554.8 386.4 C553.0 400.0 539.0 410.0 524.0 414.4" fill="none" stroke="#3C8A55" stroke-width="0.9" transform="translate(-2 0)"/><path d="M537.6 366.9 C549.0 370.0 556.0 377.0 554.8 386.4 C553.0 400.0 539.0 410.0 524.0 414.4" fill="none" stroke="#3C8A55" stroke-width="0.6" transform="translate(5 1)"/><path d="M539.2 363.8 L538.1 367.8" stroke="#4F9565" stroke-width="0.8" opacity="0.85"/><path d="M542.0 365.9 L541.0 368.8" stroke="#4F9565" stroke-width="0.8" opacity="0.85"/><path d="M546.4 366.3 L543.7 369.8" stroke="#4F9565" stroke-width="0.8" opacity="0.85"/><path d="M548.2 368.5 L546.3 371.0" stroke="#4F9565" stroke-width="0.8" opacity="0.85"/><path d="M553.0 369.6 L548.7 372.4" stroke="#4F9565" stroke-width="0.8" opacity="0.85"/><path d="M553.7 371.7 L550.9 373.9" stroke="#4F9565" stroke-width="0.8" opacity="0.85"/><path d="M558.8 373.4 L552.8 375.6" stroke="#4F9565" stroke-width="0.8" opacity="0.85"/><path d="M558.1 375.6 L554.5 377.3" stroke="#4F9565" stroke-width="0.8" opacity="0.85"/><path d="M563.3 377.9 L555.9 379.2" stroke="#4F9565" stroke-width="0.8" opacity="0.85"/><path d="M561.3 379.9 L557.0 381.2" stroke="#4F9565" stroke-width="0.8" opacity="0.85"/><path d="M566.3 382.9 L557.8 383.4" stroke="#4F9565" stroke-width="0.8" opacity="0.85"/><path d="M563.0 384.7 L558.3 385.6" stroke="#4F9565" stroke-width="0.8" opacity="0.85"/><path d="M567.3 388.2 L558.4 387.9" stroke="#4F9565" stroke-width="0.8" opacity="0.85"/><path d="M562.9 390.1 L558.0 390.7" stroke="#4F9565" stroke-width="0.8" opacity="0.85"/><path d="M566.3 393.9 L557.2 393.7" stroke="#4F9565" stroke-width="0.8" opacity="0.85"/><path d="M560.9 395.8 L555.9 396.6" stroke="#4F9565" stroke-width="0.8" opacity="0.85"/><path d="M563.6 399.3 L554.3 399.4" stroke="#4F9565" stroke-width="0.8" opacity="0.85"/><path d="M557.3 401.1 L552.3 402.0" stroke="#4F9565" stroke-width="0.8" opacity="0.85"/><path d="M559.3 404.2 L549.9 404.5" stroke="#4F9565" stroke-width="0.8" opacity="0.85"/><path d="M552.3 405.8 L547.3 406.8" stroke="#4F9565" stroke-width="0.8" opacity="0.85"/><path d="M553.6 408.6 L544.3 408.9" stroke="#4F9565" stroke-width="0.8" opacity="0.85"/><path d="M546.0 409.9 L541.2 410.9" stroke="#4F9565" stroke-width="0.8" opacity="0.85"/><path d="M546.4 412.3 L537.8 412.7" stroke="#4F9565" stroke-width="0.8" opacity="0.85"/><path d="M538.6 413.3 L534.2 414.3" stroke="#4F9565" stroke-width="0.8" opacity="0.85"/><path d="M537.9 415.5 L530.4 415.7" stroke="#4F9565" stroke-width="0.8" opacity="0.85"/><path d="M530.1 416.0 L526.5 416.8" stroke="#4F9565" stroke-width="0.8" opacity="0.85"/><path d="M491 373 C489 367 490 361 497 359.5 C502 358.5 506 358.5 509 356.5 L512 359 L511.5 365 L509.5 367.5 L509.5 374 L506.5 374 L505.5 369.5 L497.5 369.5 L496 374 L492.5 374 Z" fill="#8B3A1E"/><path d="M533 373 C535 367 534 361 527 359.5 C522 358.5 518 358.5 515 356.5 L512 359 L512.5 365 L514.5 367.5 L514.5 374 L517.5 374 L518.5 369.5 L526.5 369.5 L528 374 L531.5 374 Z" fill="#8B3A1E"/><path d="M483 372 L497 376 L512 370 L527 376 L542 372 L540 401 C537 409 523 412 512 417 C501 412 487 409 485 401 Z" fill="#2F89BD"/><path d="M489 378 L498 380.5 L512 375.5 L526 380.5 L536 378 L534 399 C531 405 521 409 512 412.5 C503 409 493 405 491 399 Z" fill="#fff"/><path d="M490 379 L498 381.5 L512 376.5 L526 381.5 L535 379 L533 398.5 C530 404.5 521 408 512 411.5 C503 408 494 404.5 492 398.5 Z" fill="#D73A34"/><circle cx="512" cy="381.5" r="3.6" fill="#F6C431"/><path d="M490.5 388 C498 384 504 386 512 387 C520 386 526 384 534.5 388 L534.5 393 L490.5 393 Z" fill="#3F9650"/><path d="M490.5 390 L534.5 390 L534.3 394 L490.7 394 Z" fill="#5FB3DF"/><path d="M492 391 Q512 380 532 391" fill="none" stroke="#fff" stroke-width="1.2"/><rect x="490.8" y="394" width="43.5" height="1.6" fill="#fff"/><rect x="511.3" y="395" width="1.6" height="16" fill="#fff"/><path d="M496 399 L502 405 L508 399" fill="none" stroke="#fff" stroke-width="1.6"/><ellipse cx="519" cy="401" rx="3.5" ry="4.5" fill="#F29A1F"/><ellipse cx="526" cy="401" rx="3" ry="4" fill="#F2C230"/><path d="M451.5 423.5 C451 419.5 456 418.5 461 420 C468 422 476 423 484 423.5 L484.5 431 C476 433 466 433.5 459 430 C455 428 452 426 451.5 423.5 Z" fill="#1F7B30"/><path d="M537.5 423.5 C545 422 552 421 558 420 C563 419.5 567 421.5 566.5 425 C566 429 561 432 555 431.5 C549 431 543 431 537.5 431 Z" fill="#F2D125"/><path d="M474 418.5 Q510 412 546 418.5 L545 426 Q510 419.5 475 426 Z" fill="#fff" stroke="#8A8A8A" stroke-width="0.6"/><path d="M485 421 Q510 417.5 535 421" fill="none" stroke="#333" stroke-width="1.3" stroke-dasharray="2 0.6"/><path d="M488 430 L499 424 L506 429 L496 433 Z M535 430 L524 424 L517 429 L527 433 Z M504 435 L511 430 L518 435 Z" fill="#C83A2E"/><path d="M497 423 l4 -3.5 l3 3.5 Z M526 423 l-4 -3.5 l-3 3.5 Z M507 421 l4 -3 l4 3 Z" fill="#3F9650"/><path d="M489 431 l7 -2 l-2 3 Z M534 431 l-7 -2 l2 3 Z" fill="#F3CF2D"/><circle cx="502" cy="425.5" r="3" fill="#F3CF2D"/><circle cx="521" cy="425.5" r="3" fill="#F3CF2D"/><ellipse cx="516.10" cy="428.50" rx="2.2" ry="1.3" transform="rotate(0 516.10 428.50)" fill="#F3CF2D"/><ellipse cx="515.48" cy="430.80" rx="2.2" ry="1.3" transform="rotate(30 515.48 430.80)" fill="#F3CF2D"/><ellipse cx="513.80" cy="432.48" rx="2.2" ry="1.3" transform="rotate(60 513.80 432.48)" fill="#F3CF2D"/><ellipse cx="511.50" cy="433.10" rx="2.2" ry="1.3" transform="rotate(90 511.50 433.10)" fill="#F3CF2D"/><ellipse cx="509.20" cy="432.48" rx="2.2" ry="1.3" transform="rotate(120 509.20 432.48)" fill="#F3CF2D"/><ellipse cx="507.52" cy="430.80" rx="2.2" ry="1.3" transform="rotate(150 507.52 430.80)" fill="#F3CF2D"/><ellipse cx="506.90" cy="428.50" rx="2.2" ry="1.3" transform="rotate(180 506.90 428.50)" fill="#F3CF2D"/><ellipse cx="507.52" cy="426.20" rx="2.2" ry="1.3" transform="rotate(210 507.52 426.20)" fill="#F3CF2D"/><ellipse cx="509.20" cy="424.52" rx="2.2" ry="1.3" transform="rotate(240 509.20 424.52)" fill="#F3CF2D"/><ellipse cx="511.50" cy="423.90" rx="2.2" ry="1.3" transform="rotate(270 511.50 423.90)" fill="#F3CF2D"/><ellipse cx="513.80" cy="424.52" rx="2.2" ry="1.3" transform="rotate(300 513.80 424.52)" fill="#F3CF2D"/><ellipse cx="515.48" cy="426.20" rx="2.2" ry="1.3" transform="rotate(330 515.48 426.20)" fill="#F3CF2D"/><circle cx="511.5" cy="428.5" r="3.4" fill="#F3CF2D"/><circle cx="511.5" cy="428.5" r="1.6" fill="#E0A21C"/></g>
<text x="1032.50" y="669.00" font-family="Liberation Sans" font-size="19" font-weight="normal" fill="#000" textLength="143.52" lengthAdjust="spacingAndGlyphs" opacity="0.22">Activar Windows</text>
<text x="1030.00" y="690.00" font-family="Liberation Sans" font-size="14" font-weight="normal" fill="#000" textLength="275.01" lengthAdjust="spacingAndGlyphs" opacity="0.22">Ve a Configuración para activar Windows.</text>
<rect x="0" y="706" width="1360" height="22" fill="#F3F3F3" />
<rect x="0" y="706" width="1360" height="1" fill="#D6D6D6" />
<text x="12.00" y="722.00" font-family="Liberation Sans" font-size="12" font-weight="normal" fill="#333" textLength="306.76" lengthAdjust="spacingAndGlyphs" >&quot;TDR_MINGA GENERAL&quot;: 9,646 caracteres (valor aproximado).</text>
<g fill="none" stroke="#666" stroke-width="1.2"><path d="M1073.5 711 h5.5 l0.5 1 l0.5 -1 h5.5 v11 h-5.5 l-0.5 1 l-0.5 -1 h-5.5 Z"/><path d="M1079.5 712 v11"/><path d="M1075 714h3 M1075 716.5h3 M1075 719h3 M1081 714h3 M1081 716.5h3 M1081 719h3" stroke-width="1"/></g>
<rect x="1100" y="707" width="40" height="21" fill="#C8C8C8" />
<g fill="none" stroke="#666" stroke-width="1.2"><rect x="1113.5" y="710.5" width="13" height="12"/><path d="M1115.5 713h9 M1115.5 715.5h9 M1115.5 718h9 M1115.5 720.5h9" stroke-width="1.1"/></g>
<g fill="none" stroke="#666" stroke-width="1.2"><path d="M1162 710.5 h-8.5 v11 h5"/><path d="M1155.5 713.5h7 M1155.5 716h5 M1155.5 718.5h3" stroke-width="1"/></g><circle cx="1163" cy="719.5" r="3.8" fill="#666"/><path d="M1161 717.5 l2 2 l-1 2 M1164 716 l1 2" stroke="#F3F3F3" stroke-width="0.8" fill="none"/>
<rect x="1186" y="716" width="7" height="1.3" fill="#444" />
<rect x="1199" y="716" width="100" height="1.3" fill="#555" />
<rect x="1247" y="712" width="5" height="11" fill="#444" />
<rect x="1304" y="716" width="8" height="1.3" fill="#444" />
<rect x="1307.3" y="713" width="1.3" height="8" fill="#444" />
<rect x="1317" y="707" width="43" height="21" fill="#D0D0D0" />
<text x="1325.60" y="720.80" font-family="Liberation Sans" font-size="11" font-weight="normal" fill="#333" textLength="26.10" lengthAdjust="spacingAndGlyphs" >100%</text>
<rect x="0" y="728" width="1360" height="40" fill="#121212" />
<rect x="48" y="728" width="344" height="40" fill="#F0F0F0" />
<rect x="48" y="728" width="344" height="1" fill="#C8C8C8" />
<rect x="48" y="767" width="344" height="1" fill="#C8C8C8" />
<text x="87.60" y="754.40" font-family="Liberation Sans" font-size="14" font-weight="normal" fill="#333" textLength="160.90" lengthAdjust="spacingAndGlyphs" >Escribe aquí para buscar</text>
<g fill="#fff"><path d="M16.3 741.5 l6.8 -1 v7.1 h-6.8 Z"/><path d="M24 740.4 l8.4 -1.2 v8.4 h-8.4 Z"/><path d="M16.3 748.4 h6.8 v7.1 l-6.8 -1 Z"/><path d="M24 748.4 h8.4 v8.4 l-8.4 -1.2 Z"/></g>
<circle cx="69.5" cy="745.5" r="5.5" fill="none" stroke="#333" stroke-width="1.4"/><path d="M65.5 749.5 l-5 6" stroke="#333" stroke-width="1.5"/>
<g><rect x="342" y="737" width="16" height="5" fill="#F4F4F4"/><rect x="338" y="743" width="24" height="4" fill="#F4F4F4"/><rect x="336" y="747.5" width="28" height="4" fill="#F4F4F4"/><rect x="335" y="753" width="31" height="4" fill="#EDE4D0"/><path d="M343 738.6 L341 736 L344 732 H356 L359.5 736 L357 738.6 Z" fill="#5AA5D8"/><path d="M339.4 743.8 L342 740.8 H361 L363.3 743.8 Z" fill="#5AA5D8"/><path d="M335.6 748 L338 745.4 H363 L365 748 Z" fill="#5AA5D8"/><path d="M333.4 753.6 L336 750.3 H365 L367.7 753.6 Z" fill="#4E9AD0"/><rect x="355" y="738" width="5" height="19" fill="#B8C4D0"/><path d="M334 765.5 L336 756.8 H364 L366 765.5 Z" fill="#A8A8A8"/><path d="M324.2 762.8 C323 757 328 752.5 334 754 L335 762.8 Z" fill="#7AB040"/><path d="M365 762.8 L366 755 C372 753 380 756 380.7 762.8 Z" fill="#7AB040"/></g>
<rect x="640" y="728" width="48" height="40" fill="#333333" />
<rect x="448" y="766" width="40" height="2" fill="#89C2F0" />
<rect x="640" y="766" width="48" height="2" fill="#89C2F0" />
<rect x="693" y="766" width="40" height="2" fill="#89C2F0" />
<rect x="742" y="766" width="40" height="2" fill="#89C2F0" />
<rect x="791" y="766" width="40" height="2" fill="#89C2F0" />
<defs><linearGradient id="eg" x1="0" y1="0" x2="1" y2="1"><stop offset="0" stop-color="#35C1F1"/><stop offset="0.6" stop-color="#2E8FE0"/><stop offset="1" stop-color="#1B5FB5"/></linearGradient><linearGradient id="eg2" x1="0" y1="0" x2="1" y2="0.3"><stop offset="0" stop-color="#38B6F2"/><stop offset="0.5" stop-color="#2EC0C8"/><stop offset="1" stop-color="#62DA60"/></linearGradient></defs>
<circle cx="419.1" cy="747.8" r="12" fill="#2490E8"/><path d="M413 752 C413 759 420 761 426 759 C428 758 429.5 757 430.5 755.5 C426 757 420 756.5 417 752 Z" fill="#1A5FB8"/><path d="M407.2 745.5 A12 12 0 0 1 431.1 748 C431 751.5 428.5 753.5 425 753.5 C421.5 753.5 420.5 750 419 748.5 C416 745.5 411 743.5 407.2 745.5 Z" fill="url(#eg2)"/><path d="M415.5 748.5 C416 745.5 420 744.5 422 747.5 C423 750.5 425.5 753 429.5 753 C427 755.5 421 755.5 418 752.5 C416.5 751.5 415.5 750 415.5 748.5 Z" fill="#121212"/>
<path d="M457 741 h8 l2 2 h11.5 v13.5 h-21.5 Z" fill="#F8C84A"/><rect x="457" y="744" width="21.5" height="12.5" fill="#FFD866"/><path d="M462 757 v-6 h11 v6 h-3 v-3 h-5 v3 Z" fill="#3C8EDB"/>
<rect x="510" y="737" width="19" height="21" rx="1.5" fill="#21A366"/><rect x="519" y="737" width="10" height="7" fill="#33C481"/><rect x="519" y="751" width="10" height="7" fill="#185C37"/><rect x="505" y="741.5" width="12" height="12" rx="1" fill="#107C41"/>
<path d="M507.8 744.5 l6.4 7 M514.2 744.5 l-6.4 7" stroke="#fff" stroke-width="1.7"/>
<defs><radialGradient id="ff" cx="0.6" cy="0.2" r="0.9"><stop offset="0" stop-color="#FFE14D"/><stop offset="0.45" stop-color="#FF8A2B"/><stop offset="1" stop-color="#E8304A"/></radialGradient></defs>
<circle cx="566" cy="748.5" r="11.3" fill="url(#ff)"/><path d="M572 736 C578 740 579 746 577 750 C575 745 573 742 568 740 Z" fill="#FFCA3A"/><circle cx="566.5" cy="748" r="5.5" fill="#7542E5"/><path d="M560 746 C562 742 568 741 571 744 C567 743 563 744 562 748 Z" fill="#FF8A2B"/>
<path d="M615 748 L604.43 741.90 A12.2 12.2 0 0 1 625.57 741.90 Z" fill="#EA4335"/><path d="M615 748 L625.57 741.90 A12.2 12.2 0 0 1 615.00 760.20 Z" fill="#FBBC04"/><path d="M615 748 L615.00 760.20 A12.2 12.2 0 0 1 604.43 741.90 Z" fill="#34A853"/><circle cx="615" cy="748" r="5.73" fill="#fff"/><circle cx="615" cy="748" r="4.51" fill="#4285F4"/>
<path d="M762 748 L751.17 741.75 A12.5 12.5 0 0 1 772.83 741.75 Z" fill="#EA4335"/><path d="M762 748 L772.83 741.75 A12.5 12.5 0 0 1 762.00 760.50 Z" fill="#FBBC04"/><path d="M762 748 L762.00 760.50 A12.5 12.5 0 0 1 751.17 741.75 Z" fill="#34A853"/><circle cx="762" cy="748" r="5.88" fill="#fff"/><circle cx="762" cy="748" r="4.62" fill="#4285F4"/>
<circle cx="767.5" cy="754" r="7" fill="#D6E6EE"/><path d="M764 758 l1.5 -7 l2 3 l2 -3 l1.5 7 Z" fill="#6A5A40"/>
<rect x="658" y="737" width="18" height="21" rx="1.5" fill="#2B7CD3"/><rect x="658" y="737" width="18" height="7" fill="#41A5EE"/><rect x="658" y="751" width="18" height="7" fill="#185ABD"/><rect x="651.5" y="742" width="13" height="12.5" rx="1" fill="#185ABD"/>
<path d="M653.5 745 l2 7 l2 -5 l2 5 l2 -7" fill="none" stroke="#fff" stroke-width="1.3"/>
<circle cx="712.7" cy="747.8" r="11.5" fill="#1ED760"/><g fill="none" stroke="#121212" stroke-linecap="round"><path d="M705.5 744.5 Q713 741.5 720.5 745" stroke-width="2"/><path d="M706.5 748.3 Q713 746 719.5 748.8" stroke-width="1.7"/><path d="M707.5 751.8 Q713 750 718.3 752.2" stroke-width="1.4"/></g>
<path d="M800 750 C798 742 806 737 814 738 C821 739 823 745 820 749 C818 752 814 750 812 753 C810 757 803 757 800 750 Z" fill="#C8E0F0"/><circle cx="804" cy="747" r="1.8" fill="#E04040"/><circle cx="808" cy="742.5" r="1.8" fill="#40A040"/><circle cx="813" cy="742" r="1.8" fill="#F0C030"/><path d="M822.5 737 l-9 20" stroke="#E0A040" stroke-width="2"/>
<path d="M1093 751 l6 -6 l6 6" fill="none" stroke="#fff" stroke-width="1.3"/>
<g fill="none" stroke="#fff" stroke-width="1.2"><rect x="1119.5" y="743.5" width="7" height="9" rx="1.5"/><path d="M1126.5 746 l3 -2 v8 l-3 -2"/><path d="M1120 741 h6 M1120 755 h6"/></g>
<g fill="none" stroke="#fff" stroke-width="1.2"><path d="M1139.5 741.5 l15 -2 v15.5 h-15 Z"/><path d="M1144 749 a3.5 3.5 0 0 1 6 -2 M1150 749 a3.5 3.5 0 0 1 -6 2"/></g><circle cx="1151.6" cy="752.4" r="3.2" fill="#F7941D"/>
<g fill="none" stroke="#fff" stroke-width="1.2"><rect x="1167.5" y="742.5" width="11" height="8"/><path d="M1173 750.5 v3.5 M1169.5 754.5 h7 M1163.5 742.5 h3 v4 h-3 Z M1165 746.5 v5"/></g>
<g fill="none" stroke="#fff" stroke-width="1.2"><path d="M1187.5 745.5 h3 l4.5 -3.5 v12.5 l-4.5 -3.5 h-3 Z"/><path d="M1197.5 745 q2 3 0 6 M1200 743.5 q3.5 4.5 0 9" /></g>
<text x="1215.50" y="751.80" font-family="Liberation Sans" font-size="12" font-weight="normal" fill="#fff" textLength="17.91" lengthAdjust="spacingAndGlyphs" >ESP</text>
<text x="1261.60" y="742.50" font-family="Liberation Sans" font-size="12" font-weight="normal" fill="#fff" textLength="26.40" lengthAdjust="spacingAndGlyphs" >12:53</text>
<text x="1249.90" y="760.40" font-family="Liberation Sans" font-size="12" font-weight="normal" fill="#fff" textLength="50.79" lengthAdjust="spacingAndGlyphs" >18/9/2024</text>
<path d="M1319 740 h16 v11 h-9 l-4 3.5 v-3.5 h-3 Z" fill="#fff"/><path d="M1322 743.5 h10 M1322 746 h10 M1322 748.5 h7" stroke="#121212" stroke-width="1"/>
<circle cx="1334.7" cy="755.5" r="7.5" fill="#3A3A3A" stroke="#9A9A9A" stroke-width="1"/>
<text x="1331.50" y="759.50" font-family="Liberation Sans" font-size="10" font-weight="normal" fill="#fff" textLength="6.01" lengthAdjust="spacingAndGlyphs" >3</text>
<rect x="1355" y="728" width="1" height="40" fill="#5A5A5A" />
</svg></body></html>
